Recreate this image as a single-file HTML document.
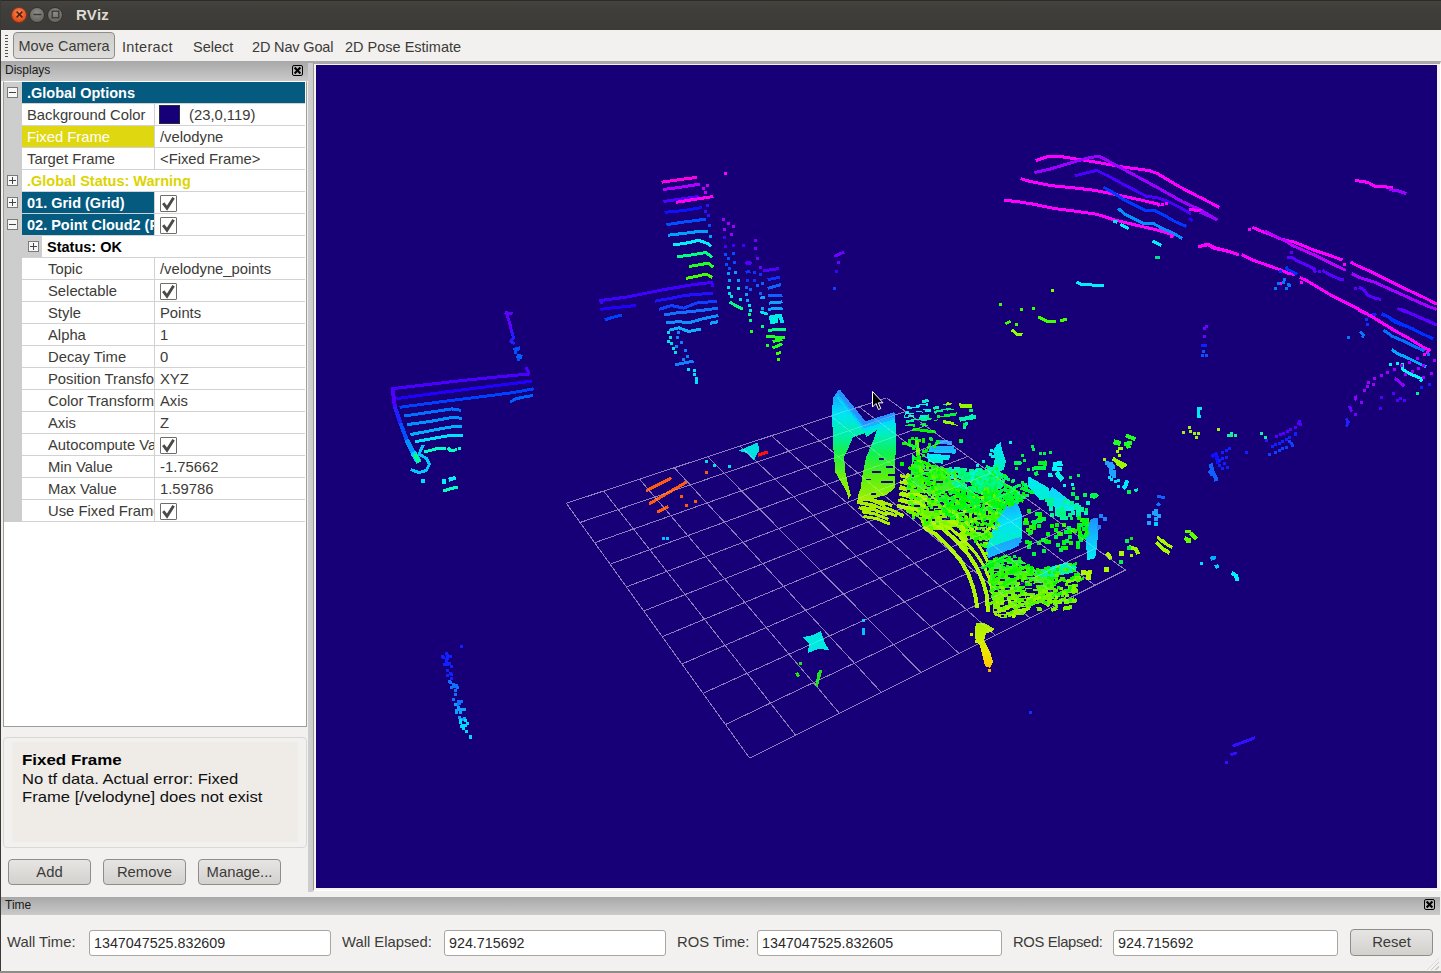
<!DOCTYPE html>
<html>
<head>
<meta charset="utf-8">
<title>RViz</title>
<style>
*{box-sizing:border-box;margin:0;padding:0}
html,body{width:1441px;height:973px;overflow:hidden;background:#f2f1f0}
body{font-family:"Liberation Sans",sans-serif;font-size:14px;color:#3c3b37;position:relative}
.abs{position:absolute}
#titlebar{left:0;top:0;width:1441px;height:30px;background:linear-gradient(#45443f 0,#3f3e3a 8px,#3c3b37 100%);border-top:1px solid #2c2b28}
#titlebar .ttl{left:76px;top:5px;font-weight:bold;font-size:15px;color:#dfdbd2;letter-spacing:.3px;white-space:nowrap}
.wb{width:16px;height:16px;border-radius:50%;top:6px}
#toolbar{left:1px;top:30px;width:1440px;height:31px;background:#f2f1f0}
.tbtn{top:39px;font-size:14.5px;color:#3c3b37;white-space:nowrap}
#leftedge{left:0;top:0;width:1px;height:973px;background:#3a3935}
.docktitle{background:linear-gradient(#a8a8a8,#cacaca);font-size:12px;color:#1a1a1a}
#tree{left:3px;top:81px;width:304px;height:646px;background:#fff;border:1px solid #9f9d99;border-top-color:#fbfaf8}
.row{position:absolute;left:22px;width:283px;height:22px;border-bottom:1px solid #d2d2d2;font-size:14.8px;color:#3c3b37}
.cell{position:absolute;top:0;height:21px;line-height:23px;overflow:hidden;white-space:nowrap}
.c1{left:0;width:132px;padding-left:5px}
.c2{left:132px;width:151px;padding-left:5px;border-left:1px solid #d2d2d2}
.full{left:0;width:283px;padding-left:5px}
.bold{font-weight:bold;font-size:14.5px}
.sel{background:#055a80;color:#fff}
.chk{position:absolute;left:5px;top:3px;width:17px;height:17px;border:1px solid #6e6d69;background:#fff;border-radius:1px}
.chk svg{position:absolute;left:0;top:0}
.exp{position:absolute;width:11px;height:11px;border:1px solid #7a7a7a;background:#f6f6f6}
.exp i{position:absolute;left:1px;top:4px;width:7px;height:1px;background:#444}
.exp b{position:absolute;left:4px;top:1px;width:1px;height:7px;background:#444}
#view{left:316px;top:65px;width:1121px;height:823px;background:#170077;overflow:hidden}
.btn{border:1px solid #8f8d88;border-radius:4px;background:linear-gradient(#e6e5e3,#d2d1ce);font-size:14.8px;text-align:center;color:#3c3b37}
.inp{top:930px;height:26px;border:1px solid #a9a6a0;border-radius:3px;background:#fff;font-size:14.3px;line-height:25px;padding-left:4px;color:#2a2a2a}
.lbl{top:934px;font-size:14.8px;white-space:nowrap}
.xicon{position:absolute;width:11px;height:11px;border:1px solid #000;border-radius:2px}
</style>
</head>
<body>
<div id="titlebar" class="abs">
  <div class="abs wb" style="left:11px;background:radial-gradient(circle at 50% 35%,#f58a5c,#df4f1c 70%);border:1px solid #8e3313"></div>
  <div class="abs wb" style="left:29px;background:radial-gradient(circle at 50% 35%,#8e8c85,#6a6862 70%);border:1px solid #34332f"></div>
  <div class="abs wb" style="left:47px;background:radial-gradient(circle at 50% 35%,#8e8c85,#6a6862 70%);border:1px solid #34332f"></div>
  <svg class="abs" style="left:0;top:0" width="80" height="29" viewBox="0 0 80 29"><path d="M16.6 10.6 L22.4 16.4 M22.4 10.6 L16.6 16.4" stroke="#5a1f0a" stroke-width="1.5"/><path d="M33.5 13.5 H41.5" stroke="#3a3935" stroke-width="1.4"/><rect x="52.2" y="10.2" width="6.6" height="6.6" fill="none" stroke="#3a3935" stroke-width="1.3"/></svg>
  <div class="abs ttl">RViz</div>
</div>
<div id="toolbar" class="abs"></div>
<div id="leftedge" class="abs"></div>
<div class="abs" style="left:5px;top:35px;width:3px;height:23px;background:repeating-linear-gradient(#55534e 0 1px,#f2f1f0 1px 3px)"></div>
<div class="abs btn" style="left:13px;top:32px;width:102px;height:27px;line-height:27px;background:linear-gradient(#cfcecb,#dedddb);font-size:14.5px">Move Camera</div>
<div class="abs tbtn" style="left:122px;letter-spacing:.3px">Interact</div>
<div class="abs tbtn" style="left:193px">Select</div>
<div class="abs tbtn" style="left:252px;letter-spacing:-.15px">2D Nav Goal</div>
<div class="abs tbtn" style="left:345px">2D Pose Estimate</div>

<div class="abs docktitle" style="left:1px;top:61px;width:307px;height:20px;padding:2px 0 0 4px">Displays</div>
<div class="abs" style="left:292px;top:65px;width:11px;height:11px"><svg width="11" height="11" viewBox="0 0 11 11" style="position:absolute;left:0;top:0"><rect x="0.5" y="0.5" width="10" height="10" rx="1.5" fill="none" stroke="#000"/><path d="M2.6 2.6 L8.4 8.4 M8.4 2.6 L2.6 8.4" stroke="#000" stroke-width="2.1"/></svg></div>
<div id="tree" class="abs"></div>
<div class="abs" style="left:4px;top:82px;width:18px;height:440px;background:#cdcdcd"></div>
<div class="row" style="top:82px"><div class="cell full sel bold">.Global Options</div></div>
<div class="exp" style="left:7px;top:87px"><i></i></div>
<div class="row" style="top:104px"><div class="cell c1">Background Color</div><div class="cell c2"><div style="position:absolute;left:4px;top:1px;width:21px;height:19px;background:#170077;border:1px solid #2a2a40"></div><span style="position:absolute;left:34px">(23,0,119)</span></div></div>
<div class="row" style="top:126px"><div class="cell c1" style="background:#dfd811;color:#fff">Fixed Frame</div><div class="cell c2">/velodyne</div></div>
<div class="row" style="top:148px"><div class="cell c1">Target Frame</div><div class="cell c2">&lt;Fixed Frame&gt;</div></div>
<div class="row" style="top:170px"><div class="cell full bold" style="color:#dcd400">.Global Status: Warning</div></div>
<div class="exp" style="left:7px;top:175px"><i></i><b></b></div>
<div class="row" style="top:192px"><div class="cell c1 sel bold">01. Grid (Grid)</div><div class="cell c2"><div class="chk"><svg width="15" height="15" viewBox="0 0 15 15"><path d="M2.2 7.2 L6 12.2 L12.6 1.8" fill="none" stroke="#4a4a48" stroke-width="2.9"/></svg></div></div></div>
<div class="exp" style="left:7px;top:197px"><i></i><b></b></div>
<div class="row" style="top:214px"><div class="cell c1 sel bold">02. Point Cloud2 (P</div><div class="cell c2"><div class="chk"><svg width="15" height="15" viewBox="0 0 15 15"><path d="M2.2 7.2 L6 12.2 L12.6 1.8" fill="none" stroke="#4a4a48" stroke-width="2.9"/></svg></div></div></div>
<div class="exp" style="left:7px;top:219px"><i></i></div>
<div class="row" style="top:236px"><div class="cell" style="left:0;width:20px;background:#cdcdcd"></div><div class="cell bold" style="left:20px;width:263px;padding-left:5px;color:#000">Status: OK</div></div>
<div class="exp" style="left:28px;top:241px"><i></i><b></b></div>
<div class="row" style="top:258px"><div class="cell c1" style="padding-left:26px">Topic</div><div class="cell c2">/velodyne_points</div></div>
<div class="row" style="top:280px"><div class="cell c1" style="padding-left:26px">Selectable</div><div class="cell c2"><div class="chk"><svg width="15" height="15" viewBox="0 0 15 15"><path d="M2.2 7.2 L6 12.2 L12.6 1.8" fill="none" stroke="#4a4a48" stroke-width="2.9"/></svg></div></div></div>
<div class="row" style="top:302px"><div class="cell c1" style="padding-left:26px">Style</div><div class="cell c2">Points</div></div>
<div class="row" style="top:324px"><div class="cell c1" style="padding-left:26px">Alpha</div><div class="cell c2">1</div></div>
<div class="row" style="top:346px"><div class="cell c1" style="padding-left:26px">Decay Time</div><div class="cell c2">0</div></div>
<div class="row" style="top:368px"><div class="cell c1" style="padding-left:26px">Position Transformer</div><div class="cell c2">XYZ</div></div>
<div class="row" style="top:390px"><div class="cell c1" style="padding-left:26px">Color Transformer</div><div class="cell c2">Axis</div></div>
<div class="row" style="top:412px"><div class="cell c1" style="padding-left:26px">Axis</div><div class="cell c2">Z</div></div>
<div class="row" style="top:434px"><div class="cell c1" style="padding-left:26px">Autocompute Value Bounds</div><div class="cell c2"><div class="chk"><svg width="15" height="15" viewBox="0 0 15 15"><path d="M2.2 7.2 L6 12.2 L12.6 1.8" fill="none" stroke="#4a4a48" stroke-width="2.9"/></svg></div></div></div>
<div class="row" style="top:456px"><div class="cell c1" style="padding-left:26px">Min Value</div><div class="cell c2">-1.75662</div></div>
<div class="row" style="top:478px"><div class="cell c1" style="padding-left:26px">Max Value</div><div class="cell c2">1.59786</div></div>
<div class="row" style="top:500px"><div class="cell c1" style="padding-left:26px">Use Fixed Frame</div><div class="cell c2"><div class="chk"><svg width="15" height="15" viewBox="0 0 15 15"><path d="M2.2 7.2 L6 12.2 L12.6 1.8" fill="none" stroke="#4a4a48" stroke-width="2.9"/></svg></div></div></div>
<!-- splitter -->
<div class="abs" style="left:308px;top:62px;width:5px;height:830px;background:#cdcdcd"></div>
<div class="abs" style="left:308px;top:61px;width:1133px;height:2px;background:#a7a7a7"></div>
<div class="abs" style="left:313px;top:61px;width:1128px;height:830px;background:#f4f3f0;border-left:1px solid #9b9995;border-top:3px solid #a9a9a9;border-bottom:1px solid #fff;border-right:1px solid #fff"></div>

<!-- info panel -->
<div class="abs" style="left:3px;top:737px;width:304px;height:111px;border:1px solid #dad8d4;border-radius:4px;background:#f2f1f0"></div>
<div class="abs" style="left:12px;top:742px;width:286px;height:100px;background:#efece8"></div>
<div class="abs" style="left:22px;top:752px;font-size:14.6px;font-weight:bold;color:#000;transform:scaleX(1.16);transform-origin:0 0;white-space:nowrap">Fixed Frame</div>
<div class="abs" style="left:22px;top:770px;font-size:14.6px;color:#111;line-height:18px;white-space:nowrap;transform:scaleX(1.14);transform-origin:0 0">No tf data. Actual error: Fixed<br>Frame [/velodyne] does not exist</div>
<div class="abs btn" style="left:8px;top:859px;width:83px;height:26px;line-height:24px">Add</div>
<div class="abs btn" style="left:103px;top:859px;width:83px;height:26px;line-height:24px">Remove</div>
<div class="abs btn" style="left:198px;top:859px;width:83px;height:26px;line-height:24px">Manage...</div>

<div id="view" class="abs">
<svg width="1121" height="823" viewBox="316 65 1121 823" style="position:absolute;left:0;top:0" fill="none" stroke-linejoin="round" shape-rendering="crispEdges">
<path d="M566.3 503.3L749.6 758.1M566.3 503.3L886.5 397.8M603.6 491.0L795.6 735.1M580.1 522.5L905.4 411.4M639.6 479.2L839.4 713.2M594.7 542.7L925.3 425.7M674.3 467.7L881.2 692.3M610.1 564.2L946.1 440.7M707.8 456.7L920.9 672.4M626.4 586.9L967.9 456.4M740.1 446.0L958.9 653.4M643.8 611.0L990.9 473.0M771.4 435.7L995.2 635.2M662.3 636.7L1015.0 490.4M801.6 425.8L1029.9 617.9M681.9 664.0L1040.4 508.7M830.8 416.1L1063.2 601.2M703.0 693.3L1067.3 528.0M859.1 406.8L1095.0 585.3M725.5 724.5L1095.6 548.4M886.5 397.8L1125.6 570.0M749.6 758.1L1125.6 570.0" stroke="#fff" stroke-opacity=".36" stroke-width="1" fill="none"/>
<path d="M1035.8 160.6 L1047.7 156.6 L1060.8 156.6 L1080.8 159.7 L1101.8 163.2 L1122.8 167 L1149 170.5 L1157.7 173.7 L1178.7 186.3 L1199.6 197.3 L1218.9 206.9" stroke="#ff00ff" stroke-width="3"/>
<path d="M1034.5 172.5 L1049.4 169.3 L1068.6 163.5 L1087.8 158 L1099.2 156.2 L1112.3 163.2 L1133.3 174.5 L1157.7 187.7 L1182.2 201.6 L1199.6 209.5 L1217.1 220" stroke="#9d00ff" stroke-width="3"/>
<path d="M1074.7 175.8 L1087.8 172.5 L1096.9 170.5 L1108.8 176.3 L1126.3 185.9 L1147.2 196.7 L1156 197.3 L1166.5 200.8 L1180.4 207.7 L1190.9 213.9" stroke="#4a00ff" stroke-width="3"/>
<path d="M1189.2 218.2 L1192.7 221.2" stroke="#2a00ff" stroke-width="3"/>
<path d="M1020.6 178.6 L1030.2 181.5 L1051.1 185.6 L1072.1 187.7 L1094.8 190.3 L1115.8 194.6 L1138.5 199.5 L1158.6 204.2 L1159.5 206.5" stroke="#ff00ff" stroke-width="3"/>
<path d="M1103.6 187.3 L1112.3 192 L1122.8 199 L1135 205.1 L1145.5 210.4 L1154.2 210.4 L1164.7 215.6 L1175.2 221.7 L1186.5 226.4" stroke="#0038ff" stroke-width="3"/>
<path d="M1003.6 200.4 L1015.3 201.3 L1033.7 204.2 L1054.6 208.6 L1075.6 211.2 L1096.6 214.2 L1115.8 220.3 L1138.5 225.7 L1157.7 230.1 L1172.6 234.8 L1171.3 238" stroke="#ff00ff" stroke-width="3"/>
<path d="M1118.1 208.3 L1124.5 213.9 L1135 219.1 L1143.7 223.5 L1153.3 223.5 L1163 228.7 L1173.4 233.1 L1182.2 238.7" stroke="#0090ff" stroke-width="3"/>
<path d="M1113.2 221.7 L1117.5 222.1" stroke="#00e0ff" stroke-width="3"/>
<path d="M1120.2 224.3 L1128.9 228.7" stroke="#00f0ff" stroke-width="3"/>
<path d="M1152.5 240.9 L1161.2 245.3" stroke="#00f0ff" stroke-width="3"/>
<path d="M1155.1 257.5 L1159.8 257.5" stroke="#00e08a" stroke-width="3"/>
<path d="M1203.1 245.3 L1208.4 244.1 L1215.4 247.9 L1225.8 250.5 L1237.2 254 L1237.7 256.1" stroke="#ff00ff" stroke-width="3"/>
<path d="M1189.2 209.5 L1201.4 210.7" stroke="#ff00ff" stroke-width="3"/>
<path d="M1076.5 282 L1080.8 284.1 L1093.1 285.1 L1104.4 285.5" stroke="#00f0ff" stroke-width="3"/>
<path d="M1354.7 180.6 L1361.7 181.3 L1367.8 182.4 L1374.8 186.2 L1381.8 186.6 L1393.1 187.6" stroke="#ff00ff" stroke-width="3"/>
<path d="M1388.7 189.7 L1397.5 190.6 L1406.2 193.6" stroke="#a000ff" stroke-width="3"/>
<path d="M1200 197.1 L1208.7 201.9 L1219.2 207.2" stroke="#ff00ff" stroke-width="3"/>
<path d="M1200 212.1 L1208.7 215.9 L1217.5 220.3" stroke="#9d00ff" stroke-width="3"/>
<path d="M1252.4 227.3 L1260.3 230.8 L1269.9 234.3 L1282.1 239.5 L1294.4 242.1 L1297.9 243.5 L1313.6 250 L1329.3 255.2 L1342.4 260" stroke="#ff00ff" stroke-width="3"/>
<path d="M1264.7 230.8 L1275.1 236 L1287.4 242.1 L1292.6 245.6 L1304.9 250.9 L1318.8 257 L1332.8 264 L1345.9 270.5" stroke="#c000ff" stroke-width="3"/>
<path d="M1200 246.5 L1202.6 245.6 L1207.9 244.8 L1214 248.3 L1226.2 250.9 L1237.6 254.4" stroke="#ff00ff" stroke-width="3"/>
<path d="M1241.9 254.7 L1252.4 260 L1266.4 264.9 L1278.6 269.2 L1289.1 273.6 L1295.2 274.5" stroke="#ff00ff" stroke-width="3"/>
<path d="M1287 257.5 L1290.9 257 L1297.9 261.4 L1308.4 265.7 L1314.5 269.2 L1315.3 272.7" stroke="#5a00ff" stroke-width="3"/>
<path d="M1322.3 270.5 L1331.1 275.3 L1339.8 279.2 L1344.2 279.7" stroke="#5a00ff" stroke-width="3"/>
<path d="M1286.2 266.3 L1287.4 269.2 L1292.6 271.8 L1297 274.5" stroke="#0030ff" stroke-width="3"/>
<path d="M1299.6 277.4 L1306.6 280.6 L1315.3 285.8 L1329.3 294.2 L1346.8 303.3 L1357.3 308.5 L1366.9 313.8" stroke="#ff00ff" stroke-width="3"/>
<path d="M1370.4 314.7 L1378.3 320.8 L1388.7 326.9 L1394 330" stroke="#ff00ff" stroke-width="3"/>
<path d="M1350.6 262.2 L1357.3 265.7 L1371.3 271.8 L1388.7 280.6 L1406.2 289.3 L1425.4 298.1 L1436.8 304.2" stroke="#ff00ff" stroke-width="3"/>
<path d="M1351.7 273.6 L1360.8 278 L1374.8 282.3 L1392.2 290.2 L1409.7 298.1 L1427.2 305.9 L1436.8 309.4" stroke="#a800ff" stroke-width="3"/>
<path d="M1359 287.2 L1364.3 290.2 L1367.8 295.4 L1374.8 298.1 L1380.9 299.5" stroke="#5a00ff" stroke-width="3"/>
<path d="M1397.5 308.5 L1404.5 310.6 L1415 315.5 L1427.2 320.8 L1436.8 325.2" stroke="#5a00ff" stroke-width="3"/>
<path d="M1372.1 314.1 L1376.5 315.2" stroke="#1020ff" stroke-width="3"/>
<path d="M1381.8 314.1 L1385.3 315.9" stroke="#1020ff" stroke-width="3"/>
<path d="M1388.7 317.3 L1394 321.7 L1402.7 325.2 L1415 329.5" stroke="#0030ff" stroke-width="3"/>
<path d="M1358.2 310 L1367.8 314.4 L1378.3 320.5 L1392.2 329.2 L1409.7 338.8 L1423.7 347.6 L1430.7 350.5" stroke="#ff00ff" stroke-width="3"/>
<path d="M1401 310 L1415 315.2 L1427.2 320.5 L1436.8 324.9" stroke="#5a00ff" stroke-width="3"/>
<path d="M1381.8 313.8 L1388.7 317 L1397.5 322.2 L1409.7 327.5 L1423.7 334.5 L1433.3 338.8" stroke="#0030ff" stroke-width="3"/>
<path d="M1383.5 330.1 L1392.2 336.2 L1404.5 341.5 L1415 346.7 L1424.6 351.1" stroke="#0070ff" stroke-width="3"/>
<path d="M1391.7 349.3 L1397.5 353.7 L1406.2 357.2 L1416.7 362.4 L1423.7 365.9 L1426.3 366.8" stroke="#00a8ff" stroke-width="3"/>
<path d="M1402.4 362.8 L1402.7 369.4 L1409.7 373.8 L1418.5 377.3 L1422 379 L1420.2 381.7" stroke="#00f8ff" stroke-width="3"/>
<path d="M1359.9 331.3 L1363.4 334.5 L1362.5 337.6" stroke="#0078ff" stroke-width="3"/>
<path d="M1394.9 378.2 L1399.2 381.7 L1404.1 386" stroke="#9000ff" stroke-width="3"/>
<path d="M1355.2 395.6 L1356.1 400.5" stroke="#9000ff" stroke-width="3"/>
<path d="M1349.4 406.1 L1351.7 411.7" stroke="#7000ff" stroke-width="3"/>
<path d="M1345.9 418.4 L1348.2 421.8 L1346.5 426.7" stroke="#2020ff" stroke-width="3"/>
<path d="M1200.9 345.8 L1207.3 345.8" stroke="#1020ff" stroke-width="3"/>
<path d="M1125.8 435.4 L1135.4 439.2" stroke="#20ff20" stroke-width="4"/>
<path d="M1113.6 441.8 L1120.6 443.6" stroke="#20ff20" stroke-width="5"/>
<path d="M1124.1 444.1 L1131.9 442.4" stroke="#20ff20" stroke-width="4"/>
<path d="M1126.4 447.3 L1130.5 446.2" stroke="#20ff20" stroke-width="3"/>
<path d="M1117.6 448.3 L1122.5 448.3" stroke="#a0f800" stroke-width="3"/>
<path d="M1112.7 458.4 L1118 461.9 L1126.7 465.8" stroke="#a0f800" stroke-width="4"/>
<path d="M1116.2 462.8 L1123.2 468.1" stroke="#a0f800" stroke-width="3"/>
<path d="M1127.6 480.3 L1125 486.4 L1123.2 488.5" stroke="#00e8ff" stroke-width="4"/>
<path d="M1134.6 490.8 L1138.1 489.6" stroke="#00f0c0" stroke-width="3"/>
<path d="M1090 496 L1097 495.1" stroke="#20ff90" stroke-width="4"/>
<path d="M1211.5 456.7 L1215.8 454.1 L1218.5 463.7" stroke="#1010ff" stroke-width="4"/>
<path d="M1210.6 463.7 L1212.3 470.7 L1215.8 477.7 L1216.4 481.2" stroke="#1060ff" stroke-width="4"/>
<path d="M1208.8 470.7 L1212.3 475.9" stroke="#1060ff" stroke-width="3"/>
<path d="M1157.3 496 L1165.1 498.1" stroke="#1060ff" stroke-width="3"/>
<path d="M1157.3 503.4 L1159.9 505.6" stroke="#1070ff" stroke-width="3"/>
<path d="M1128.4 546.7 L1136.3 549.3 L1138.1 554.2" stroke="#a0f800" stroke-width="4"/>
<path d="M1119.4 554 L1123.6 553.2" stroke="#a0f800" stroke-width="4"/>
<path d="M1106.6 552.8 L1111 558.9" stroke="#b0f000" stroke-width="4"/>
<path d="M1157.3 536.7 L1163.4 542.3 L1172.1 547.6" stroke="#a8f800" stroke-width="3"/>
<path d="M1156.4 542.3 L1163.4 549.3 L1169.5 552.8" stroke="#a8f800" stroke-width="4"/>
<path d="M1162.5 539.7 L1167.8 545" stroke="#a8f800" stroke-width="3"/>
<path d="M1185.2 531.8 L1191.4 531.8" stroke="#60ff00" stroke-width="3"/>
<path d="M1190.5 532.7 L1196.6 538.8" stroke="#60ff00" stroke-width="4"/>
<path d="M1184.4 538 L1190.5 540.6" stroke="#60ff00" stroke-width="4"/>
<path d="M1186.1 541.8 L1190.5 541.8" stroke="#60ff00" stroke-width="3"/>
<path d="M1210.6 558.9 L1215.8 557.2" stroke="#00b0ff" stroke-width="4"/>
<path d="M1216.2 564.7 L1217.6 568.2" stroke="#00d0ff" stroke-width="4"/>
<path d="M1231.6 572.9 L1235.9 575.5 L1237.7 580.8" stroke="#00f0ff" stroke-width="4"/>
<path d="M391.3 388.8 L421.1 385.3 L462.2 380.5 L503.3 376.4 L529 374 L525.9 366.8" stroke="#4a00ff" stroke-width="3"/>
<path d="M396.4 398.6 L441.6 392.5 L482.7 387.3 L532.1 381.2" stroke="#2000ff" stroke-width="3"/>
<path d="M399.5 407.3 L441.6 401.7 L482.7 396.6 L513.6 392.5 L533.7 388.8" stroke="#0040ff" stroke-width="3"/>
<path d="M509.9 402.1 L515.6 399 L523.8 397 L533.1 395.5" stroke="#0060ff" stroke-width="3"/>
<path d="M403.6 416.1 L431.4 412 L451.9 408.9 L461.2 410.3" stroke="#0070ff" stroke-width="3"/>
<path d="M406.7 424.7 L431.4 421.2 L451.9 417.5 L462.2 418.2" stroke="#0090ff" stroke-width="3"/>
<path d="M410.4 434.6 L431.4 430.5 L451.9 426.8 L462.2 426.4" stroke="#00b0ff" stroke-width="3"/>
<path d="M414.9 441.8 L431.4 438.7 L451.9 435.2 L463.2 435.2" stroke="#00e0ff" stroke-width="3"/>
<path d="M424.2 452.1 L435.5 449 L445.8 448.4" stroke="#00ffc0" stroke-width="3"/>
<path d="M447.8 447.9 L450.9 451 L457.1 449.6" stroke="#00ffc0" stroke-width="3"/>
<path d="M392.7 388.8 L394.8 406.8" stroke="#5000ff" stroke-width="4"/>
<path d="M394.8 406.8 L400.5 423.3" stroke="#2020ff" stroke-width="4"/>
<path d="M400.5 423.3 L406.7 439.7" stroke="#0050ff" stroke-width="4"/>
<path d="M406.7 439.7 L412.9 452.1" stroke="#0090ff" stroke-width="5"/>
<path d="M412.9 452.1 L419 462.3" stroke="#00d0ff" stroke-width="6"/>
<path d="M423.2 444.9 L419 454.1 L426.2 458.2 L429.3 464.4 L426.2 470.5 L419 472.6 L410.8 469.5" stroke="#00c8ff" stroke-width="3"/>
<path d="M414.9 454.1 L419 462.3" stroke="#00ff90" stroke-width="4"/>
<path d="M443.7 478.8 L443.7 483.9" stroke="#00f0ff" stroke-width="4"/>
<path d="M448.8 479.8 L455.6 477.7" stroke="#00f0ff" stroke-width="4"/>
<path d="M442.7 491.1 L450.9 488.6 L458.1 487" stroke="#00ffc0" stroke-width="3"/>
<path d="M504.7 312.3 L512.5 314" stroke="#6000ff" stroke-width="3"/>
<path d="M506.4 313.4 L509.5 322.6 L511.5 330.8" stroke="#6000ff" stroke-width="3"/>
<path d="M511.5 330.8 L513.6 338 L510.9 341.1 L514.6 344.2" stroke="#2020ff" stroke-width="3"/>
<path d="M513.6 349.9 L520.1 348.3" stroke="#0050ff" stroke-width="4"/>
<path d="M516.6 355.5 L522.2 356.9" stroke="#0060ff" stroke-width="4"/>
<path d="M661.6 182.2 L678.8 179.7 L697.3 177.3" stroke="#ff00e0" stroke-width="3"/>
<path d="M662.8 189.6 L681.3 187.1 L699.8 184.2" stroke="#b000ff" stroke-width="3"/>
<path d="M663.5 201.5 L681.3 199 L698.6 196.5" stroke="#5000ff" stroke-width="3"/>
<path d="M675.9 202.4 L693.6 199.5 L713.4 196.5" stroke="#ff00f0" stroke-width="3"/>
<path d="M664.5 212.3 L683.8 210.6 L702.3 207.4" stroke="#1010ff" stroke-width="3"/>
<path d="M666.5 224.7 L686.2 221.7 L706 219.2" stroke="#0050ff" stroke-width="3"/>
<path d="M667.7 235.3 L688.7 232.8 L701 231.1 L708 231.6" stroke="#00a0ff" stroke-width="3"/>
<path d="M672.7 245.1 L688.7 242.7 L698.6 240.2 L708.4 243.9 L711.4 246.4" stroke="#00f0ff" stroke-width="3"/>
<path d="M676.9 256.7 L691.2 255 L706 252.5 L712.2 257.5" stroke="#00ff80" stroke-width="3"/>
<path d="M688.7 266.6 L698.6 264.9 L708.4 263.1 L713.4 267.3" stroke="#20ff20" stroke-width="3"/>
<path d="M685.7 278.4 L696.1 276.5 L706 274 L712.2 277.2" stroke="#40ff00" stroke-width="3"/>
<path d="M599.4 300.7 L627 297 L664 289.6 L693.6 284.6 L713.4 282.2" stroke="#4000ff" stroke-width="3"/>
<path d="M600.4 309.3 L614.7 307.6 L635.7 305.6" stroke="#2000ff" stroke-width="3"/>
<path d="M604.8 319.9 L612.2 317.4 L622.1 315" stroke="#0040ff" stroke-width="3"/>
<path d="M654.7 301.2 L671.4 298.2 L683.8 295.7 L693.6 294.5 L713.4 293.3" stroke="#2010ff" stroke-width="3"/>
<path d="M659.1 309.3 L671.4 305.6 L683.8 308.1 L696.1 303.1 L717.1 301.2" stroke="#1040ff" stroke-width="3"/>
<path d="M664 315 L676.4 313 L688.7 311.8 L701 310.5 L718.3 308.1" stroke="#1070ff" stroke-width="3"/>
<path d="M666 322.9 L678.8 321.6 L688.7 322.9 L701 319.2 L718.3 315.5" stroke="#1090ff" stroke-width="3"/>
<path d="M669 330.3 L678.8 327.8 L688.7 331.5 L701 329" stroke="#10b0ff" stroke-width="3"/>
<path d="M709.7 323.4 L718.3 321.6" stroke="#10a0ff" stroke-width="3"/>
<path d="M675.1 364.8 L693.6 361.1" stroke="#1080ff" stroke-width="3"/>
<path d="M696.6 377.2 L696.6 384.1" stroke="#00e0ff" stroke-width="3"/>
<path d="M729.4 301.9 L735.6 305.6 L743 309.3" stroke="#00ff80" stroke-width="3"/>
<path d="M745.5 262.4 L751.6 263.6" stroke="#5000ff" stroke-width="4"/>
<path d="M762.7 271 L778.8 268.6" stroke="#5000ff" stroke-width="3"/>
<path d="M745.5 272.3 L750.4 271.5" stroke="#1030ff" stroke-width="3"/>
<path d="M767.7 279.7 L780 277.2" stroke="#1030ff" stroke-width="3"/>
<path d="M767.7 288.3 L781.2 284.6" stroke="#1060ff" stroke-width="3"/>
<path d="M767.7 295.7 L782.5 295.2" stroke="#1060ff" stroke-width="3"/>
<path d="M760.3 298.2 L765.2 297" stroke="#10a0ff" stroke-width="3"/>
<path d="M768.9 303.1 L782.5 301.9" stroke="#10a0ff" stroke-width="3"/>
<path d="M767.7 309.3 L782.5 308.1" stroke="#10a0ff" stroke-width="3"/>
<path d="M760.3 311.8 L767.7 314.2" stroke="#00e8e8" stroke-width="3"/>
<path d="M768.9 317.9 L780 315.5 L782.5 322.9" stroke="#00e8e8" stroke-width="4"/>
<path d="M767.7 330.3 L786.2 329" stroke="#00ff80" stroke-width="3"/>
<path d="M766.4 336.4 L784.9 337.7" stroke="#20ff20" stroke-width="3"/>
<path d="M772.6 341.4 L782.5 339.6" stroke="#20ff20" stroke-width="3"/>
<path d="M772.6 348 L782.5 343.8" stroke="#20ff20" stroke-width="3"/>
<path d="M776.3 353.7 L781.2 352.5" stroke="#40ff00" stroke-width="3"/>
<path d="M646 491 L671.5 477.8" stroke="#ff5a10" stroke-width="3"/>
<path d="M648.9 504.1 L686.7 481.9" stroke="#ff5a10" stroke-width="3"/>
<path d="M657.1 512.3 L668.2 506.6" stroke="#ff5a10" stroke-width="3"/>
<polygon points="738.5,450.7 757.8,442.5 759.5,449.9 753.7,460.1 747.5,453.2" fill="#00e0e0"/>
<path d="M757.8 455.2 L768.1 451.9" stroke="#ff1010" stroke-width="3"/>
<polygon points="803,637 813,635 821,631 824,641 829,650 818,649 808,653 809,644" fill="#00e8e0"/>
<path d="M796.4 672.6 L798.9 676.7" stroke="#20e020" stroke-width="3"/>
<path d="M820.7 670.1 L816.2 686.2" stroke="#20e020" stroke-width="3"/>
<path d="M863.4 627.8 L863.4 634.8" stroke="#00c0ff" stroke-width="3"/>
<path d="M1038.3 316.8 L1047 321.1 L1055.6 322" stroke="#40ff00" stroke-width="3"/>
<path d="M1059.9 320.7 L1066.8 319.4" stroke="#40ff00" stroke-width="3"/>
<path d="M1005.5 323.7 L1010.7 321.1" stroke="#40ff00" stroke-width="3"/>
<path d="M1011.6 329.7 L1016.7 334.1 L1022.4 334.9" stroke="#90ff00" stroke-width="3"/>
<path d="M1198.9 407.4 L1198 418.2" stroke="#00e8f0" stroke-width="3"/>
<path d="M1230.4 754.9 L1236.9 752.7" stroke="#3010ff" stroke-width="3"/>
<path d="M1232.5 746.2 L1249.8 739.7 L1255 737.6" stroke="#3010ff" stroke-width="3"/>
<path d="M834.3 256.3 L844.2 252" stroke="#7000ff" stroke-width="3"/>
<linearGradient id="g1" gradientUnits="userSpaceOnUse" x1="0" y1="390" x2="0" y2="498.7"><stop offset="0" stop-color="#2494ff"/><stop offset="0.1" stop-color="#12b4ff"/><stop offset="0.22" stop-color="#00e4f4"/><stop offset="0.42" stop-color="#00f0a8"/><stop offset="0.58" stop-color="#18f048"/><stop offset="0.8" stop-color="#70f010"/><stop offset="1" stop-color="#a8f000"/></linearGradient>
<polygon points="838.5,390 843.1,394.6 864.7,422.4 864.7,433.2 857.8,435.5 853.1,437 848.5,447.8 843.9,457.1 845.4,472.5 850.8,495.6 848.5,498.7 846.2,491 835.4,472.5 833.1,444.7 832,410.8 833.1,397.7" fill="url(#g1)"/>
<linearGradient id="g2" gradientUnits="userSpaceOnUse" x1="0" y1="413.1" x2="0" y2="503.3"><stop offset="0" stop-color="#12b0ff"/><stop offset="0.1" stop-color="#00e0f8"/><stop offset="0.25" stop-color="#00f0b8"/><stop offset="0.45" stop-color="#10f050"/><stop offset="0.7" stop-color="#58f010"/><stop offset="1" stop-color="#a8f000"/></linearGradient>
<polygon points="864.7,422.4 894.7,413.1 895.8,426.2 895.2,487.9 886.3,494.8 857,503.3 858.5,494 860.8,487.9 862.4,475.5 866.2,457.1 873.2,440.9 877,430.1 866.2,437.3 864.7,433.2" fill="url(#g2)"/>
<path d="M838.5 396.3 L864.7 428.7 L894.7 419.5" stroke="#00dcf8" stroke-width="5"/>
<path d="M838.5 393.3 L864.7 425.6 L894.7 416.4" stroke="#14b4ff" stroke-width="5"/>
<path d="M838.5 391.1 L864.7 423.5 L894.7 414.2" stroke="#2890ff" stroke-width="4"/>
<rect x="872.4" y="470.9" width="8.5" height="1.8" fill="#170077"/>
<rect x="878.6" y="458.3" width="4.9" height="1.5" fill="#170077"/>
<rect x="880.9" y="480.9" width="11.6" height="1.8" fill="#170077"/>
<rect x="870.9" y="493.3" width="5.4" height="1.8" fill="#170077"/>
<rect x="886.3" y="466.3" width="6.2" height="1.5" fill="#170077"/>
<rect x="866.2" y="478.6" width="4.6" height="1.5" fill="#170077"/>
<rect x="887.8" y="474" width="6.9" height="1.5" fill="#170077"/>
<path d="M857 502.5 L869.3 504.8 L878.6 512.5" stroke="#a8f000" stroke-width="3"/>
<path d="M858.5 507.6 L870.9 511.3" stroke="#a8f000" stroke-width="3"/>
<path d="M881.6 506.4 L894 511 L903.2 516.4" stroke="#a8f000" stroke-width="3"/>
<path d="M884.7 512.2 L897.1 515.9" stroke="#a8f000" stroke-width="3"/>
<path d="M866.2 499.4 L881.6 501.7 L892.4 505.6" stroke="#a8f000" stroke-width="3"/>
<path d="M900.1 486.3 L912.5 491 L924.8 495.6" stroke="#a8f000" stroke-width="3"/>
<path d="M901.7 492.5 L918.6 498.7 L931 503.3" stroke="#a8f000" stroke-width="3"/>
<path d="M900.1 498.7 L912.5 503.3 L927.9 509.5" stroke="#a8f000" stroke-width="3"/>
<path d="M897.1 504.8 L909.4 509.5 L920.2 514.1" stroke="#a8f000" stroke-width="3"/>
<path d="M903.2 480.2 L918.6 486.3 L927.9 491" stroke="#a8f000" stroke-width="3"/>
<path d="M906.3 474 L920.2 480.2" stroke="#a8f000" stroke-width="3"/>
<path d="M858.5 497.9 L870.9 500.2 L884.7 505.6" stroke="#a8f000" stroke-width="3"/>
<path d="M859.8 502.5 L872.4 504.8 L886 510.2" stroke="#a8f000" stroke-width="3"/>
<path d="M861 507.1 L873.9 509.5 L887.2 514.8" stroke="#a8f000" stroke-width="3"/>
<path d="M862.2 511.8 L875.5 514.1 L888.4 519.5" stroke="#a8f000" stroke-width="3"/>
<path d="M863.5 516.4 L877 518.7 L889.7 524.1" stroke="#a8f000" stroke-width="3"/>
<path d="M900.1 475.5 L912.5 479.4 L926.3 485.6" stroke="#a8f000" stroke-width="3"/>
<path d="M899.7 481.7 L912.5 485.6 L927 491.7" stroke="#a8f000" stroke-width="3"/>
<path d="M899.2 487.9 L912.5 491.7 L927.6 497.9" stroke="#a8f000" stroke-width="3"/>
<path d="M898.8 494 L912.5 497.9 L928.2 504.1" stroke="#a8f000" stroke-width="3"/>
<path d="M898.3 500.2 L912.5 504.1 L928.8 510.2" stroke="#a8f000" stroke-width="3"/>
<path d="M897.8 506.4 L912.5 510.2 L929.4 516.4" stroke="#a8f000" stroke-width="3"/>
<path d="M921.7 401.6 L928.6 400.5" stroke="#00f7c5" stroke-width="3"/>
<path d="M907.1 407.7 L927.9 404.7" stroke="#00f7f7" stroke-width="3"/>
<path d="M904.8 413.1 L931 410.1" stroke="#00f7de" stroke-width="3"/>
<path d="M904 417 L927.9 416.2" stroke="#00f7c5" stroke-width="3"/>
<path d="M906.3 421.6 L931 418.5" stroke="#00f794" stroke-width="3"/>
<path d="M905.5 426.2 L927.9 424.7" stroke="#00f74a" stroke-width="3"/>
<path d="M933.3 408.5 L947.9 404.7" stroke="#00f7ad" stroke-width="3"/>
<path d="M934 412.4 L954.1 408.5" stroke="#00f77b" stroke-width="3"/>
<path d="M937.1 417 L957.2 413.9" stroke="#00f731" stroke-width="3"/>
<path d="M943.3 421.6 L958.7 424.4" stroke="#94f700" stroke-width="3"/>
<path d="M946.4 403.1 L951.3 405" stroke="#94f700" stroke-width="3"/>
<path d="M958.7 404.7 L971.8 406.5" stroke="#94f700" stroke-width="3"/>
<path d="M969.2 410.8 L972.9 410.8" stroke="#00f731" stroke-width="3"/>
<path d="M958.7 418.8 L976.4 417" stroke="#00f77b" stroke-width="3"/>
<path d="M963.3 424.7 L968.3 423.8" stroke="#00f731" stroke-width="3"/>
<path d="M912.5 429 L935.6 432.1" stroke="#00f700" stroke-width="3"/>
<path d="M927.9 415.4 L937.1 420.4" stroke="#00f731" stroke-width="3"/>
<path d="M929 416h7v2h-7zM929 415h5v2h-5zM914 415h6v2h-6zM947 405h4v2h-4zM909 422h6v2h-6zM906 426h7v2h-7zM940 417h4v2h-4zM905 415h3v2h-3zM914 409h3v2h-3zM929 413h6v2h-6zM932 418h5v2h-5zM940 414h4v2h-4zM959 426h6v2h-6zM943 410h4v2h-4zM920 405h6v2h-6zM926 423h5v2h-5zM956 423h3v2h-3zM915 424h5v2h-5zM958 412h3v2h-3zM938 421h4v2h-4zM909 411h7v2h-7zM945 406h4v2h-4zM910 405h6v2h-6zM914 416h5v2h-5zM914 420h4v2h-4zM939 406h5v2h-5zM916 409h7v2h-7zM948 410h7v2h-7zM916 412h6v2h-6zM939 405h7v2h-7zM916 409h6v2h-6zM922 410h3v2h-3zM909 417h4v2h-4zM937 412h5v2h-5zM956 414h5v2h-5zM951 407h4v2h-4zM954 422h4v2h-4zM914 420h7v2h-7zM915 425h7v2h-7zM937 413h3v2h-3z" fill="#170077"/>
<linearGradient id="g3" gradientUnits="userSpaceOnUse" x1="0" y1="454" x2="0" y2="529.9"><stop offset="0" stop-color="#20f060"/><stop offset="0.35" stop-color="#30f030"/><stop offset="0.7" stop-color="#70f010"/><stop offset="1" stop-color="#98f000"/></linearGradient>
<polygon points="912.5,454 926.3,466.3 947.9,467.8 974.1,474 1000,472.5 1000,529.9 931,529.9 915.5,515.6 906.3,487.9 910.9,472.5" fill="url(#g3)"/>
<path d="M929 508h5v2h-5zM983 499h5v2h-5zM923 509h3v2h-3zM928 496h8v2h-8zM964 475h9v2h-9zM932 488h3v2h-3zM923 482h6v2h-6zM919 481h8v2h-8zM998 504h7v2h-7zM992 507h9v2h-9zM951 509h5v2h-5zM957 510h8v2h-8zM975 507h8v2h-8zM992 481h7v2h-7zM991 520h6v2h-6zM980 520h6v2h-6zM965 483h6v2h-6zM966 529h8v2h-8zM975 483h7v2h-7zM961 487h8v2h-8zM914 511h3v2h-3zM963 491h4v2h-4zM972 492h7v2h-7zM993 473h3v2h-3zM935 505h4v2h-4zM968 488h8v2h-8zM937 505h4v2h-4zM947 515h8v2h-8zM989 483h6v2h-6zM953 518h8v2h-8zM973 526h5v2h-5zM922 488h5v2h-5zM926 485h7v2h-7zM953 478h8v2h-8zM998 488h3v2h-3zM960 477h8v2h-8zM965 488h7v2h-7zM968 515h9v2h-9zM907 490h7v2h-7zM923 475h5v2h-5zM972 494h7v2h-7zM977 484h8v2h-8zM994 509h4v2h-4zM949 501h8v2h-8zM942 497h8v2h-8zM981 526h6v2h-6zM974 516h7v2h-7zM991 528h9v2h-9zM957 514h5v2h-5zM992 519h5v2h-5zM914 487h6v2h-6zM978 491h3v2h-3zM938 514h4v2h-4zM920 493h7v2h-7zM985 506h9v2h-9zM952 526h4v2h-4zM927 494h5v2h-5zM975 503h6v2h-6zM985 497h5v2h-5zM942 518h8v2h-8zM926 519h9v2h-9zM955 498h4v2h-4zM957 492h7v2h-7zM955 484h8v2h-8zM959 491h7v2h-7zM912 495h5v2h-5zM996 524h5v2h-5zM947 516h8v2h-8zM951 478h4v2h-4zM964 524h4v2h-4zM924 471h7v2h-7zM936 481h7v2h-7zM916 510h4v2h-4zM954 473h4v2h-4zM956 487h5v2h-5zM945 494h4v2h-4zM925 502h7v2h-7zM956 519h7v2h-7zM976 516h8v2h-8zM936 478h9v2h-9zM929 509h5v2h-5zM946 514h4v2h-4zM944 506h3v2h-3zM925 506h8v2h-8zM954 512h6v2h-6zM913 462h3v2h-3zM958 493h6v2h-6zM920 468h4v2h-4zM985 529h9v2h-9zM915 459h9v2h-9zM950 512h5v2h-5zM950 493h6v2h-6zM972 518h4v2h-4zM949 510h5v2h-5zM925 467h6v2h-6zM981 508h8v2h-8zM965 485h7v2h-7zM954 529h8v2h-8zM931 523h7v2h-7zM979 516h5v2h-5zM990 521h7v2h-7zM978 512h5v2h-5zM938 490h3v2h-3zM940 502h7v2h-7zM928 526h7v2h-7zM938 504h6v2h-6zM956 484h9v2h-9zM966 507h8v2h-8zM964 510h5v2h-5zM925 483h4v2h-4zM930 523h6v2h-6zM954 527h6v2h-6zM1000 502h8v2h-8zM913 499h8v2h-8zM921 490h4v2h-4zM953 500h3v2h-3zM995 486h6v2h-6zM962 482h5v2h-5zM968 497h5v2h-5zM973 476h3v2h-3zM921 511h5v2h-5zM990 511h3v2h-3zM999 526h3v2h-3zM991 487h6v2h-6zM955 525h7v2h-7zM950 528h8v2h-8zM965 489h4v2h-4zM911 494h4v2h-4zM948 505h6v2h-6zM931 498h6v2h-6zM979 494h9v2h-9zM996 510h4v2h-4zM980 501h5v2h-5zM932 506h6v2h-6zM962 502h8v2h-8zM924 473h9v2h-9zM992 521h3v2h-3zM912 475h6v2h-6zM914 505h6v2h-6zM965 482h6v2h-6zM926 480h7v2h-7zM918 515h7v2h-7zM946 474h8v2h-8zM941 504h9v2h-9zM937 496h7v2h-7zM993 486h5v2h-5zM914 460h6v2h-6zM952 506h5v2h-5zM926 504h3v2h-3zM935 509h7v2h-7z" fill="#170077"/>
<path d="M912.5 497.4L922.2 500.8" stroke="#7bf700" stroke-width="3"/>
<path d="M926 464.2L938 468.4" stroke="#31f700" stroke-width="3"/>
<path d="M955.6 500.4L962.6 502.8" stroke="#7bf700" stroke-width="3"/>
<path d="M965.3 479.2L971.7 481.5" stroke="#62f700" stroke-width="3"/>
<path d="M989.5 492.1L998.4 495.3" stroke="#62f700" stroke-width="3"/>
<path d="M992.9 499L1006 503.6" stroke="#62f700" stroke-width="3"/>
<path d="M925.7 473.8L932.3 476.1" stroke="#18f700" stroke-width="3"/>
<path d="M936 511.6L945.5 514.9" stroke="#7bf700" stroke-width="3"/>
<path d="M944.8 523L953.6 526.1" stroke="#7bf700" stroke-width="3"/>
<path d="M917.2 489.4L925.3 492.3" stroke="#31f700" stroke-width="3"/>
<path d="M920.3 514.2L932.8 518.6" stroke="#7bf700" stroke-width="3"/>
<path d="M986.6 470.7L999.8 475.3" stroke="#18f700" stroke-width="3"/>
<path d="M938.3 524.3L946.6 527.2" stroke="#7bf700" stroke-width="3"/>
<path d="M933.3 466.3L947.4 471.2" stroke="#00f700" stroke-width="3"/>
<path d="M954.8 486.7L960.9 488.8" stroke="#18f700" stroke-width="3"/>
<path d="M929.4 502.1L941.8 506.4" stroke="#62f700" stroke-width="3"/>
<path d="M986.9 524.4L992.1 526.2" stroke="#7bf700" stroke-width="3"/>
<path d="M940.3 468.9L950.4 472.4" stroke="#31f700" stroke-width="3"/>
<path d="M958.3 490.5L974 496" stroke="#31f700" stroke-width="3"/>
<path d="M992.2 471.3L1006.3 476.2" stroke="#18f700" stroke-width="3"/>
<path d="M966.4 528.7L972.1 530.7" stroke="#94f700" stroke-width="3"/>
<path d="M934.7 496.7L942.1 499.3" stroke="#31f700" stroke-width="3"/>
<path d="M915.3 470.2L921.9 472.5" stroke="#31f700" stroke-width="3"/>
<path d="M908.3 495.3L920.2 499.4" stroke="#4af700" stroke-width="3"/>
<path d="M916.6 510.1L929.7 514.7" stroke="#62f700" stroke-width="3"/>
<path d="M906.8 479.7L912 481.5" stroke="#18f700" stroke-width="3"/>
<path d="M991.7 519.3L996.9 521.2" stroke="#94f700" stroke-width="3"/>
<path d="M949.1 485.5L955.3 487.7" stroke="#31f700" stroke-width="3"/>
<path d="M924.9 483L931.3 485.3" stroke="#31f700" stroke-width="3"/>
<path d="M905.1 443.4L915.7 447.1" stroke="#18f700" stroke-width="3"/>
<path d="M913.9 477L925 480.9" stroke="#31f700" stroke-width="3"/>
<path d="M992.2 484.1L1001.7 487.5" stroke="#31f700" stroke-width="3"/>
<path d="M981.2 524.9L990.8 528.3" stroke="#adf700" stroke-width="3"/>
<path d="M906.3 510.8L919.4 515.4" stroke="#62f700" stroke-width="3"/>
<path d="M910.5 485.4L915.8 487.3" stroke="#62f700" stroke-width="3"/>
<path d="M922 524.7L934.1 528.9" stroke="#62f700" stroke-width="3"/>
<path d="M924.8 480.3L937 484.6" stroke="#18f700" stroke-width="3"/>
<path d="M989.2 488L999.7 491.6" stroke="#31f700" stroke-width="3"/>
<path d="M929.8 475.1L940 478.7" stroke="#4af700" stroke-width="3"/>
<path d="M938.6 477.9L944.1 479.9" stroke="#18f700" stroke-width="3"/>
<path d="M949.7 472.9L957.1 475.5" stroke="#4af700" stroke-width="3"/>
<path d="M971.7 481.4L976.8 483.2" stroke="#4af700" stroke-width="3"/>
<path d="M953.6 524.7L962.6 527.9" stroke="#7bf700" stroke-width="3"/>
<path d="M955.5 490.3L964 493.3" stroke="#4af700" stroke-width="3"/>
<path d="M947.4 506.1L953 508" stroke="#7bf700" stroke-width="3"/>
<path d="M916.1 459.7L929.9 464.5" stroke="#18f700" stroke-width="3"/>
<path d="M981.5 473L989.7 475.8" stroke="#18f700" stroke-width="3"/>
<path d="M922.9 510.8L936.6 515.6" stroke="#62f700" stroke-width="3"/>
<path d="M947.9 521.1L959.9 525.3" stroke="#adf700" stroke-width="3"/>
<path d="M987.6 505L998.9 509" stroke="#94f700" stroke-width="3"/>
<path d="M966.7 473.7L979.2 478.1" stroke="#00f700" stroke-width="3"/>
<path d="M970.9 475.6L984.1 480.3" stroke="#4af700" stroke-width="3"/>
<path d="M940 476.5L946.3 478.7" stroke="#4af700" stroke-width="3"/>
<path d="M962.5 486.9L968.8 489" stroke="#62f700" stroke-width="3"/>
<path d="M923.4 523.7L934.6 527.6" stroke="#62f700" stroke-width="3"/>
<path d="M913.3 473.7L924.2 477.5" stroke="#18f700" stroke-width="3"/>
<path d="M935.3 469.9L947.7 474.3" stroke="#00f700" stroke-width="3"/>
<path d="M943.2 499.5L952.5 502.7" stroke="#4af700" stroke-width="3"/>
<path d="M910.6 490.2L917.8 492.7" stroke="#62f700" stroke-width="3"/>
<path d="M908.2 467.5L919.7 471.5" stroke="#18f700" stroke-width="3"/>
<path d="M916.3 438.6 L918.6 457.1 L921.7 472.5" stroke="#62f700" stroke-width="4"/>
<path d="M937.9 441.6 L951.8 442.9" stroke="#3496ff" stroke-width="4"/>
<path d="M928.6 449.7 L955.6 451.2" stroke="#10c4ff" stroke-width="5"/>
<path d="M931 447.5 L954.1 447.8" stroke="#20acff" stroke-width="4"/>
<path d="M926.6 455.8 L949.5 457.8" stroke="#00ecf0" stroke-width="5"/>
<path d="M927.9 460.1 L943.3 461.7" stroke="#00f0d0" stroke-width="4"/>
<linearGradient id="g4" gradientUnits="userSpaceOnUse" x1="0" y1="441.9" x2="0" y2="472.4"><stop offset="0" stop-color="#00e4f8"/><stop offset="1" stop-color="#00f0c0"/></linearGradient>
<polygon points="1000.4,441.9 1002.4,450.9 1005.9,461.6 1003.9,469.3 998.5,472.4 993.1,467.8 994.7,458.6 993.1,450.9 996.2,445.5" fill="url(#g4)"/>
<path d="M1014.2 463.2 L1021.6 462.4" stroke="#00f762" stroke-width="4"/>
<path d="M1037.8 463.5 L1045.5 462.4 L1044.5 466.3" stroke="#00f718" stroke-width="4"/>
<path d="M1032.4 468.6 L1046.3 467.8" stroke="#00f74a" stroke-width="4"/>
<path d="M1035.5 471.7 L1037.1 475.5" stroke="#00f74a" stroke-width="4"/>
<path d="M1090.7 494.3 L1094.1 497.1 L1097.5 494" stroke="#00f74a" stroke-width="4"/>
<path d="M960 405.9 L971.6 406.5" stroke="#94f700" stroke-width="4"/>
<path d="M960 419.7 L969.2 417.7 L976.2 417.3" stroke="#00f7ad" stroke-width="4"/>
<path d="M970.8 414.6 L972.6 418.5" stroke="#00f7ad" stroke-width="4"/>
<path d="M1053.2 464.4 L1062.5 463.5" stroke="#00f7f7" stroke-width="5"/>
<path d="M1051.7 469.3 L1061.7 468.6" stroke="#00f7f7" stroke-width="4"/>
<path d="M1047.8 475.5 L1052.5 475.1" stroke="#00f7de" stroke-width="4"/>
<path d="M1056.3 472.4 L1062.5 480.1" stroke="#00f7de" stroke-width="5"/>
<linearGradient id="g5" gradientUnits="userSpaceOnUse" x1="0" y1="476.3" x2="0" y2="500.2"><stop offset="0" stop-color="#00e8f8"/><stop offset="1" stop-color="#00f0d0"/></linearGradient>
<polygon points="1028.6,476.3 1048.6,487.8 1048.6,498.6 1040.1,500.2 1027.8,486.3" fill="url(#g5)"/>
<linearGradient id="g6" gradientUnits="userSpaceOnUse" x1="0" y1="487.1" x2="0" y2="511"><stop offset="0" stop-color="#10d0ff"/><stop offset="1" stop-color="#00f0e0"/></linearGradient>
<polygon points="1052.5,487.1 1075.6,504.8 1074,511 1058.6,511 1048.6,501.7 1048.6,492.5" fill="url(#g6)"/>
<path d="M970 477.3L982.1 482.2" stroke="#00f77b" stroke-width="3"/>
<path d="M971 470.1L984.7 475.6" stroke="#00f794" stroke-width="3"/>
<path d="M1002.7 488.8L1014.5 493.5" stroke="#00f74a" stroke-width="3"/>
<path d="M989.7 479.2L999.4 483.1" stroke="#00f762" stroke-width="3"/>
<path d="M978.8 498.1L985.2 500.6" stroke="#00f731" stroke-width="3"/>
<path d="M967.5 476.2L981.2 481.7" stroke="#00f77b" stroke-width="3"/>
<path d="M959.5 502L968.9 505.7" stroke="#00f731" stroke-width="3"/>
<path d="M1021.6 487.6L1032.7 492.1" stroke="#00f74a" stroke-width="3"/>
<path d="M1001.7 483.8L1012.4 488.1" stroke="#00f718" stroke-width="3"/>
<path d="M1011 489.2L1017.8 492" stroke="#00f731" stroke-width="3"/>
<path d="M1003.2 493.6L1009.1 496" stroke="#00f700" stroke-width="3"/>
<path d="M983.5 478.5L990.5 481.3" stroke="#00f74a" stroke-width="3"/>
<path d="M981.6 499.4L994.8 504.7" stroke="#00f718" stroke-width="3"/>
<path d="M996 501.8L1006.6 506" stroke="#00f700" stroke-width="3"/>
<path d="M977.5 469.1L988.5 473.5" stroke="#00f74a" stroke-width="3"/>
<path d="M999.2 495.2L1011.4 500.2" stroke="#00f74a" stroke-width="3"/>
<path d="M985.9 466.4L996.4 470.6" stroke="#00f77b" stroke-width="3"/>
<path d="M1014.4 496.3L1022.7 499.7" stroke="#18f700" stroke-width="3"/>
<path d="M1009.4 495.8L1023.3 501.4" stroke="#00f718" stroke-width="3"/>
<path d="M1020.7 488L1033.7 493.2" stroke="#00f731" stroke-width="3"/>
<path d="M956.7 482.2L964.8 485.5" stroke="#00f77b" stroke-width="3"/>
<path d="M981.2 479.1L992.4 483.6" stroke="#00f731" stroke-width="3"/>
<path d="M977.7 486.1L983.8 488.5" stroke="#00f74a" stroke-width="3"/>
<path d="M984.7 505.8L992.7 509" stroke="#00f718" stroke-width="3"/>
<path d="M969.7 492.6L976.8 495.4" stroke="#00f700" stroke-width="3"/>
<path d="M976.6 510.4L984.3 513.5" stroke="#18f700" stroke-width="3"/>
<path d="M990.6 479L1000.4 482.9" stroke="#00f731" stroke-width="3"/>
<path d="M977.5 479.4L989.9 484.3" stroke="#00f762" stroke-width="3"/>
<path d="M1001.1 494.6L1013.9 499.7" stroke="#00f731" stroke-width="3"/>
<path d="M957.9 471.9L969.6 476.6" stroke="#00f794" stroke-width="3"/>
<path d="M965.4 493.7L976 497.9" stroke="#00f731" stroke-width="3"/>
<path d="M987.7 478.3L1001.5 483.8" stroke="#00f74a" stroke-width="3"/>
<path d="M961.1 499.3L968.4 502.3" stroke="#00f700" stroke-width="3"/>
<path d="M976.6 496.2L984.5 499.3" stroke="#00f731" stroke-width="3"/>
<path d="M974.3 507.3L980.1 509.6" stroke="#00f700" stroke-width="3"/>
<path d="M958.4 470L971.9 475.4" stroke="#00f74a" stroke-width="3"/>
<path d="M1006.1 492.8L1011.1 494.8" stroke="#00f74a" stroke-width="3"/>
<path d="M1011 490.5L1020 494.1" stroke="#00f700" stroke-width="3"/>
<path d="M990.1 511.2L1001.2 515.7" stroke="#31f700" stroke-width="3"/>
<path d="M1004.9 500.8L1012.9 504" stroke="#00f718" stroke-width="3"/>
<linearGradient id="g7" gradientUnits="userSpaceOnUse" x1="0" y1="501.7" x2="0" y2="549.9"><stop offset="0" stop-color="#20a8ff"/><stop offset="0.3" stop-color="#00dcf8"/><stop offset="0.7" stop-color="#00f0d0"/><stop offset="1" stop-color="#00f0a0"/></linearGradient>
<polygon points="1006.2,506.3 1017,501.7 1021.6,514 1021.6,538.7 995.4,549.9 986.2,549.9 995.4,517.1" fill="url(#g7)"/>
<linearGradient id="g8" gradientUnits="userSpaceOnUse" x1="0" y1="537.2" x2="0" y2="549.9"><stop offset="0" stop-color="#24a0ff"/><stop offset="1" stop-color="#18b8ff"/></linearGradient>
<polygon points="990.8,543.3 1020.9,537.2 1021.6,541.8 1010.9,549.9 989.3,549.9" fill="url(#g8)"/>
<path d="M1031.7 523.3 L1044.5 518.7" stroke="#00f74a" stroke-width="4"/>
<linearGradient id="g9" gradientUnits="userSpaceOnUse" x1="0" y1="517.9" x2="0" y2="549.9"><stop offset="0" stop-color="#2090ff"/><stop offset="0.5" stop-color="#10b8ff"/><stop offset="1" stop-color="#00e8f0"/></linearGradient>
<polygon points="1091,518.7 1097.5,517.9 1098.7,527.9 1096.4,549.9 1086.4,549.9 1084.8,532.5" fill="url(#g9)"/>
<path d="M960 523.3 L967.7 531" stroke="#94f700" stroke-width="3"/>
<path d="M960 527.9 L967.7 535.6" stroke="#94f700" stroke-width="3"/>
<path d="M960 532.5 L967.7 540.2" stroke="#94f700" stroke-width="3"/>
<path d="M960 537.2 L967.7 544.9" stroke="#94f700" stroke-width="3"/>
<path d="M960 541.8 L967.7 549.5" stroke="#94f700" stroke-width="3"/>
<path d="M960 546.4 L967.7 554.1" stroke="#94f700" stroke-width="3"/>
<path d="M923.4 527.1 L935.1 533.9 L948.8 546.6 L960.5 560.3 L968.3 574 L973.2 587.6 L976.1 599.3 L977.1 608.1" stroke="#adf700" stroke-width="4"/>
<path d="M929.3 521.2 L943 529 L956.6 540.8 L968.3 554.4 L977.1 568.1 L983 581.8 L986.9 595.4 L987.9 612" stroke="#adf700" stroke-width="4"/>
<path d="M939 522.2 L952.7 530 L964.4 540.8 L975.2 552.5 L984 566.1 L989.8 579.8 L992.7 593.5" stroke="#adf700" stroke-width="3"/>
<path d="M950.8 519.3 L962.5 527.1 L974.2 538.8 L982 550.5 L987.9 562.2" stroke="#adf700" stroke-width="3"/>
<path d="M900 493.9 L919.5 494.9 L929.3 501.7" stroke="#adf700" stroke-width="3"/>
<path d="M900 500.7 L915.6 501.7 L927.3 507.6" stroke="#adf700" stroke-width="3"/>
<path d="M900 506.6 L911.7 507.6 L923.4 512.5" stroke="#adf700" stroke-width="3"/>
<path d="M900 513.8 L903.5 515.8" stroke="#adf700" stroke-width="3"/>
<linearGradient id="g10" gradientUnits="userSpaceOnUse" x1="0" y1="557.4" x2="0" y2="617.9"><stop offset="0" stop-color="#28f048"/><stop offset="0.4" stop-color="#48f020"/><stop offset="0.75" stop-color="#80f008"/><stop offset="1" stop-color="#a8f000"/></linearGradient>
<polygon points="987.9,560.3 1017.1,557.4 1034.7,569.1 1056.2,581.8 1056.2,596.4 1048.4,607.1 1036.7,600.3 1025,614 1001.5,617.9 993.7,615 991.8,591.5" fill="url(#g10)"/>
<path d="M1026 591h4v2h-4zM996 584h8v2h-8zM1027 589h6v2h-6zM1000 605h4v2h-4zM1003 574h4v2h-4zM1001 562h6v2h-6zM1000 596h7v2h-7zM1031 586h7v2h-7zM1008 585h7v2h-7zM1003 602h7v2h-7zM1054 595h6v2h-6zM1040 575h5v2h-5zM1017 602h7v2h-7zM1001 615h9v2h-9zM1030 581h4v2h-4zM1037 595h8v2h-8zM1018 602h7v2h-7zM1031 591h7v2h-7zM1034 600h6v2h-6zM1054 586h4v2h-4zM1023 579h4v2h-4zM994 609h3v2h-3zM1019 596h6v2h-6zM999 579h6v2h-6zM1025 586h6v2h-6zM1042 594h5v2h-5zM1053 594h5v2h-5zM1025 610h3v2h-3zM1032 587h5v2h-5zM999 571h6v2h-6zM1017 594h5v2h-5zM1030 586h8v2h-8zM1055 590h5v2h-5zM1005 601h6v2h-6zM1035 573h8v2h-8zM1006 610h6v2h-6zM1015 592h6v2h-6zM1025 591h9v2h-9zM1007 559h4v2h-4zM1022 608h3v2h-3zM992 576h6v2h-6zM1054 597h8v2h-8zM1034 572h5v2h-5zM1021 564h9v2h-9zM1021 569h6v2h-6zM1043 574h7v2h-7zM994 572h4v2h-4zM1022 599h4v2h-4zM1035 593h8v2h-8zM1056 585h6v2h-6zM1000 562h7v2h-7zM994 590h4v2h-4zM1006 604h6v2h-6zM998 598h9v2h-9zM1030 584h6v2h-6zM997 588h4v2h-4zM1026 575h9v2h-9zM1017 607h9v2h-9zM1019 604h6v2h-6zM1015 565h7v2h-7zM1051 599h5v2h-5zM1024 579h5v2h-5zM1021 588h4v2h-4zM1038 573h5v2h-5zM1005 594h6v2h-6zM1035 583h8v2h-8zM1026 564h6v2h-6zM1005 575h9v2h-9zM1021 602h4v2h-4zM1003 565h3v2h-3zM1013 558h7v2h-7zM1004 604h8v2h-8zM1004 588h8v2h-8zM1029 589h4v2h-4zM993 569h6v2h-6zM1029 585h7v2h-7zM1026 596h5v2h-5zM1045 590h8v2h-8zM1041 599h6v2h-6zM1005 564h7v2h-7zM1005 594h6v2h-6zM1029 583h4v2h-4zM1009 600h8v2h-8zM1010 576h6v2h-6zM1017 596h8v2h-8zM1019 584h7v2h-7zM1009 608h6v2h-6zM1026 589h5v2h-5zM997 612h9v2h-9zM1042 574h3v2h-3z" fill="#170077"/>
<rect x="1017.1" y="575.9" width="8" height="8" fill="#170077"/>
<path d="M1049.2 585.4L1065.1 578.2" stroke="#4af700" stroke-width="3"/>
<path d="M1070 592L1076.9 588.9" stroke="#31f700" stroke-width="3"/>
<path d="M1013.5 608.7L1026.4 602.9" stroke="#62f700" stroke-width="3"/>
<path d="M1016 579.1L1029.9 572.8" stroke="#18f700" stroke-width="3"/>
<path d="M1036.7 602.1L1044.1 598.8" stroke="#94f700" stroke-width="3"/>
<path d="M1049.2 579.4L1059 575" stroke="#18f700" stroke-width="3"/>
<path d="M988.5 604.4L1001.2 598.7" stroke="#62f700" stroke-width="3"/>
<path d="M1065.7 570.7L1075.2 566.4" stroke="#31f700" stroke-width="3"/>
<path d="M1025.6 607.1L1041.5 599.9" stroke="#4af700" stroke-width="3"/>
<path d="M1053.1 603.8L1059.1 601.1" stroke="#7bf700" stroke-width="3"/>
<path d="M1068.3 581.4L1076 577.9" stroke="#62f700" stroke-width="3"/>
<path d="M1029.6 580.9L1045 573.9" stroke="#31f700" stroke-width="3"/>
<path d="M1024.3 567.5L1029.8 565" stroke="#00f700" stroke-width="3"/>
<path d="M1039.2 589.7L1049.7 584.9" stroke="#4af700" stroke-width="3"/>
<path d="M1003.8 607.9L1012.3 604.1" stroke="#7bf700" stroke-width="3"/>
<path d="M1020.6 577.9L1033.9 571.9" stroke="#4af700" stroke-width="3"/>
<path d="M1034.7 603L1043.5 599" stroke="#4af700" stroke-width="3"/>
<path d="M1016.8 596.7L1022.9 593.9" stroke="#62f700" stroke-width="3"/>
<path d="M1034.5 596.9L1044.6 592.3" stroke="#7bf700" stroke-width="3"/>
<path d="M1006 572.1L1017.8 566.7" stroke="#31f700" stroke-width="3"/>
<path d="M989.7 563.7L1001.6 558.4" stroke="#00f718" stroke-width="3"/>
<path d="M1052.4 596.5L1067 589.9" stroke="#31f700" stroke-width="3"/>
<path d="M1003.7 583.7L1019.5 576.7" stroke="#18f700" stroke-width="3"/>
<path d="M1042.8 597.7L1051.6 593.8" stroke="#7bf700" stroke-width="3"/>
<path d="M1011.4 573.5L1023.4 568.1" stroke="#18f700" stroke-width="3"/>
<path d="M987.9 582.9L1003 576.1" stroke="#31f700" stroke-width="3"/>
<path d="M1057.9 569.8L1066.8 565.8" stroke="#00f700" stroke-width="3"/>
<path d="M1008.2 604.6L1019.7 599.4" stroke="#62f700" stroke-width="3"/>
<path d="M1076.1 581.6L1084.1 578" stroke="#18f700" stroke-width="3"/>
<path d="M1037.2 602.2L1047.5 597.6" stroke="#62f700" stroke-width="3"/>
<path d="M1019.1 575.4L1027.3 571.7" stroke="#4af700" stroke-width="3"/>
<path d="M989.2 591.6L1005.1 584.5" stroke="#31f700" stroke-width="3"/>
<path d="M1046.3 604.4L1053.5 601.1" stroke="#62f700" stroke-width="3"/>
<path d="M985.8 565L992.2 562.2" stroke="#18f700" stroke-width="3"/>
<path d="M1028.4 571.3L1034.3 568.7" stroke="#4af700" stroke-width="3"/>
<path d="M1069.7 566.5L1076.9 563.3" stroke="#00f700" stroke-width="3"/>
<path d="M981.3 568.4L993.5 562.9" stroke="#00f718" stroke-width="3"/>
<path d="M1008.6 605.7L1023.9 598.8" stroke="#4af700" stroke-width="3"/>
<path d="M1056.4 602.4L1066 598.1" stroke="#62f700" stroke-width="3"/>
<path d="M1072.2 593.3L1077.5 590.9" stroke="#62f700" stroke-width="3"/>
<path d="M1064.1 603L1074.4 598.4" stroke="#4af700" stroke-width="3"/>
<path d="M1051.9 573.3L1064.6 567.5" stroke="#00f700" stroke-width="3"/>
<path d="M1024.7 610.5L1029.8 608.2" stroke="#94f700" stroke-width="3"/>
<path d="M1008.9 572.7L1021.1 567.2" stroke="#00f700" stroke-width="3"/>
<path d="M992.1 576.4L1001.5 572.2" stroke="#18f700" stroke-width="3"/>
<path d="M1062.8 592.5L1076 586.6" stroke="#31f700" stroke-width="3"/>
<path d="M1028.5 602.1L1042.9 595.6" stroke="#4af700" stroke-width="3"/>
<path d="M994.6 561.1L1007.3 555.4" stroke="#00f718" stroke-width="3"/>
<path d="M997.4 612.5L1010.7 606.5" stroke="#94f700" stroke-width="3"/>
<path d="M994.8 600.2L1006.7 594.8" stroke="#7bf700" stroke-width="3"/>
<linearGradient id="g11" gradientUnits="userSpaceOnUse" x1="0" y1="562.2" x2="0" y2="577.9"><stop offset="0" stop-color="#00f0c8"/><stop offset="1" stop-color="#10f090"/></linearGradient>
<polygon points="1034.7,571 1067.9,562.2 1076.7,567.1 1075.7,572 1048.4,577.9 1036.7,575.9" fill="url(#g11)"/>
<linearGradient id="g12" gradientUnits="userSpaceOnUse" x1="0" y1="490" x2="0" y2="548.6"><stop offset="0" stop-color="#28f050"/><stop offset="0.5" stop-color="#50f020"/><stop offset="1" stop-color="#98f000"/></linearGradient>
<polygon points="939,490 991.8,490 997.6,511.5 988.8,548.6 978.1,536.9 964.4,525.1 946.9,513.4" fill="url(#g12)"/>
<path d="M992 503h8v2h-8zM980 522h8v2h-8zM965 514h4v2h-4zM989 509h8v2h-8zM995 509h7v2h-7zM963 494h8v2h-8zM940 491h5v2h-5zM989 504h7v2h-7zM978 494h6v2h-6zM964 517h6v2h-6zM980 514h6v2h-6zM988 530h4v2h-4zM947 506h9v2h-9zM968 527h7v2h-7zM976 500h6v2h-6zM984 502h5v2h-5zM968 516h9v2h-9zM985 540h6v2h-6zM946 512h4v2h-4zM962 516h6v2h-6zM949 500h7v2h-7zM969 514h6v2h-6zM974 493h6v2h-6zM975 520h4v2h-4zM982 502h5v2h-5zM973 506h8v2h-8zM977 525h9v2h-9zM965 512h7v2h-7zM972 506h9v2h-9zM952 494h6v2h-6zM987 526h6v2h-6zM956 500h6v2h-6zM988 522h9v2h-9zM986 522h7v2h-7zM988 500h8v2h-8zM979 511h7v2h-7zM969 527h9v2h-9zM991 518h5v2h-5zM981 529h4v2h-4zM969 506h7v2h-7zM949 507h5v2h-5zM990 528h7v2h-7zM984 513h6v2h-6zM977 502h8v2h-8zM952 498h7v2h-7zM959 501h7v2h-7zM970 521h6v2h-6zM981 531h8v2h-8zM946 495h6v2h-6zM979 504h9v2h-9zM956 519h6v2h-6zM960 510h4v2h-4zM993 516h6v2h-6zM997 512h3v2h-3zM954 511h6v2h-6zM961 508h6v2h-6zM967 501h6v2h-6zM973 524h7v2h-7zM966 502h9v2h-9zM946 508h6v2h-6zM963 502h8v2h-8zM975 498h6v2h-6zM982 540h9v2h-9zM978 512h9v2h-9zM984 514h7v2h-7zM969 497h8v2h-8zM989 542h4v2h-4zM985 492h6v2h-6zM957 520h5v2h-5zM971 515h8v2h-8zM978 506h4v2h-4zM953 509h6v2h-6zM973 512h9v2h-9zM957 491h4v2h-4zM982 511h8v2h-8zM949 503h6v2h-6zM976 530h6v2h-6zM958 508h5v2h-5zM984 528h4v2h-4zM943 491h7v2h-7zM991 522h6v2h-6zM963 523h8v2h-8zM984 520h5v2h-5zM977 494h6v2h-6zM971 522h6v2h-6zM994 523h6v2h-6zM960 517h5v2h-5zM965 505h3v2h-3zM960 492h7v2h-7zM958 506h6v2h-6zM941 493h8v2h-8zM979 505h7v2h-7zM960 520h5v2h-5zM971 528h8v2h-8zM993 514h5v2h-5zM974 520h7v2h-7zM954 512h3v2h-3zM981 538h7v2h-7zM945 509h9v2h-9zM986 499h4v2h-4zM982 528h3v2h-3zM970 501h8v2h-8zM970 491h5v2h-5zM991 532h3v2h-3zM994 505h7v2h-7zM984 523h4v2h-4zM994 514h4v2h-4zM977 510h8v2h-8zM987 500h6v2h-6zM965 497h8v2h-8z" fill="#170077"/>
<path d="M992.6 503.9L1004.9 508.8" stroke="#00f718" stroke-width="3"/>
<path d="M989.2 497.8L996.5 500.8" stroke="#18f700" stroke-width="3"/>
<path d="M974.8 511.9L987.5 517" stroke="#31f700" stroke-width="3"/>
<path d="M972.6 506.7L982.4 510.6" stroke="#00f700" stroke-width="3"/>
<path d="M983.6 492L990.6 494.8" stroke="#00f718" stroke-width="3"/>
<path d="M987.7 502.4L1000.5 507.5" stroke="#00f700" stroke-width="3"/>
<path d="M952.1 515L966.3 520.7" stroke="#00f700" stroke-width="3"/>
<path d="M965.7 532.2L978.6 537.4" stroke="#4af700" stroke-width="3"/>
<path d="M954.5 499.7L966.4 504.5" stroke="#18f700" stroke-width="3"/>
<path d="M980.7 490.3L994 495.7" stroke="#00f700" stroke-width="3"/>
<path d="M955.1 495.3L962.4 498.2" stroke="#18f700" stroke-width="3"/>
<path d="M931.2 488.4L942.3 492.8" stroke="#00f718" stroke-width="3"/>
<path d="M982.9 496.1L998.6 502.3" stroke="#00f700" stroke-width="3"/>
<path d="M962.5 498.8L970.2 501.8" stroke="#18f700" stroke-width="3"/>
<path d="M949.2 507.2L955.4 509.6" stroke="#31f700" stroke-width="3"/>
<path d="M990.6 518L1000.6 522" stroke="#4af700" stroke-width="3"/>
<path d="M983.1 491.3L991.3 494.6" stroke="#00f718" stroke-width="3"/>
<path d="M970.1 536.8L975.9 539.1" stroke="#62f700" stroke-width="3"/>
<path d="M959.7 496.1L966.2 498.7" stroke="#18f700" stroke-width="3"/>
<path d="M961.1 506.6L974.9 512.1" stroke="#18f700" stroke-width="3"/>
<path d="M951.6 491.6L959.3 494.6" stroke="#00f731" stroke-width="3"/>
<path d="M963.2 506.4L972.1 509.9" stroke="#00f700" stroke-width="3"/>
<path d="M957.5 507.3L971.8 513" stroke="#31f700" stroke-width="3"/>
<path d="M953.4 491.4L967.3 497" stroke="#00f718" stroke-width="3"/>
<path d="M989.5 499.9L1003.7 505.5" stroke="#00f718" stroke-width="3"/>
<path d="M964.4 517.5L978.2 523.1" stroke="#31f700" stroke-width="3"/>
<path d="M987.3 515.6L996.4 519.2" stroke="#31f700" stroke-width="3"/>
<path d="M973.3 533.1L985.2 537.8" stroke="#4af700" stroke-width="3"/>
<path d="M974.6 488.4L984.9 492.5" stroke="#00f731" stroke-width="3"/>
<path d="M979.8 544.2L987.3 547.2" stroke="#31f700" stroke-width="3"/>
<path d="M986.1 502L993.2 504.9" stroke="#18f700" stroke-width="3"/>
<path d="M987.6 492L992.9 494.1" stroke="#00f731" stroke-width="3"/>
<path d="M989.8 509.7L994.9 511.8" stroke="#00f718" stroke-width="3"/>
<path d="M990.8 514.8L1003.1 519.7" stroke="#4af700" stroke-width="3"/>
<path d="M953.7 500.1L964.3 504.4" stroke="#00f718" stroke-width="3"/>
<path d="M966.9 525.4L974.3 528.3" stroke="#4af700" stroke-width="3"/>
<path d="M945.9 508.7L956 512.8" stroke="#00f718" stroke-width="3"/>
<path d="M946.6 503L959.7 508.2" stroke="#00f718" stroke-width="3"/>
<path d="M946 508.5L955.6 512.3" stroke="#31f700" stroke-width="3"/>
<path d="M944.5 503.2L958.4 508.7" stroke="#00f700" stroke-width="3"/>
<path d="M966 532.2L979.2 537.5" stroke="#18f700" stroke-width="3"/>
<path d="M981.1 490.4L987.5 493" stroke="#00f700" stroke-width="3"/>
<path d="M940 498.9L947.5 501.9" stroke="#00f718" stroke-width="3"/>
<path d="M981.8 522.1L992.9 526.5" stroke="#18f700" stroke-width="3"/>
<path d="M969.3 493.3L979.4 497.3" stroke="#00f700" stroke-width="3"/>
<path d="M942.5 509.8L953.9 514.3" stroke="#00f700" stroke-width="3"/>
<path d="M950.2 514.9L960.7 519.1" stroke="#00f700" stroke-width="3"/>
<path d="M972.9 510.4L983.6 514.7" stroke="#00f718" stroke-width="3"/>
<path d="M966.7 533.5L977.9 538" stroke="#62f700" stroke-width="3"/>
<path d="M998 514.9L1003.2 517" stroke="#18f700" stroke-width="3"/>
<linearGradient id="g13" gradientUnits="userSpaceOnUse" x1="0" y1="537.8" x2="0" y2="558.3"><stop offset="0" stop-color="#20a0ff"/><stop offset="1" stop-color="#10c0ff"/></linearGradient>
<polygon points="985.9,549.6 1017.1,537.8 1019.5,545.6 987.9,558.3" fill="url(#g13)"/>
<linearGradient id="g14" gradientUnits="userSpaceOnUse" x1="0" y1="505.6" x2="0" y2="548.6"><stop offset="0" stop-color="#18b0ff"/><stop offset="0.4" stop-color="#00e4f4"/><stop offset="1" stop-color="#00f0c0"/></linearGradient>
<polygon points="995.7,521.2 1011.3,505.6 1017.1,511.5 1019.1,536.9 985.9,548.6 991.8,533" fill="url(#g14)"/>
<linearGradient id="g15" gradientUnits="userSpaceOnUse" x1="0" y1="518.3" x2="0" y2="560.3"><stop offset="0" stop-color="#2090ff"/><stop offset="0.5" stop-color="#10c0ff"/><stop offset="1" stop-color="#00f0f0"/></linearGradient>
<polygon points="1092.3,519.3 1097.2,518.3 1098.2,534.9 1095.2,558.3 1087.4,560.3 1085.5,533" fill="url(#g15)"/>
<path d="M1107 552.9 L1110.9 558.3" stroke="#adf700" stroke-width="4"/>
<path d="M1066 581.8 L1079.6 577.9" stroke="#7bf700" stroke-width="4"/>
<path d="M1067.9 587.6 L1075.7 585.7" stroke="#7bf700" stroke-width="4"/>
<path d="M1067.9 591.5 L1077.7 589.6" stroke="#7bf700" stroke-width="4"/>
<path d="M1064 602.3 L1076.7 600.3" stroke="#7bf700" stroke-width="4"/>
<path d="M1063 608.7 L1071.8 607.1" stroke="#7bf700" stroke-width="4"/>
<path d="M1051.3 610.1 L1057.2 608.1" stroke="#7bf700" stroke-width="4"/>
<path d="M1036.7 609.5 L1041.6 608.7" stroke="#7bf700" stroke-width="4"/>
<path d="M1073.8 577.9 L1080.6 576.9" stroke="#7bf700" stroke-width="4"/>
<linearGradient id="g16" gradientUnits="userSpaceOnUse" x1="0" y1="622.8" x2="0" y2="668.1"><stop offset="0" stop-color="#a8f000"/><stop offset="0.35" stop-color="#c8f000"/><stop offset="0.65" stop-color="#f0e800"/><stop offset="1" stop-color="#ffc400"/></linearGradient>
<polygon points="976.1,622.8 984,622.8 993.7,628.6 993.3,631 985.9,633.5 984.3,640.3 990.2,652.1 992.9,661.8 990.2,668.1 985.1,666.1 980.1,646.2 975.4,638.4 975.4,626.7" fill="url(#g16)"/>
<path d="M1161 203h3v3h-3zM1165 202h3v3h-3zM1198 245h3v3h-3zM1248 228h3v3h-3zM1343 263h3v3h-3zM1279 282h3v3h-3zM1300 281h3v3h-3zM1423 353h3v3h-3zM1426 351h3v3h-3zM724 172h3v3h-3z" fill="#ff00ff" stroke="none"/>
<path d="M1051 289h3v3h-3z" fill="#80ff00" stroke="none"/>
<path d="M1290 251h3v3h-3zM1318 270h3v3h-3zM1354 287h3v3h-3z" fill="#5a00ff" stroke="none"/>
<path d="M1279 270h3v3h-3z" fill="#0030ff" stroke="none"/>
<path d="M1274 287h3v3h-3zM1277 282h3v3h-3zM1283 278h3v3h-3zM1282 281h3v3h-3zM1285 287h3v3h-3zM1287 283h3v3h-3zM1288 284h3v3h-3zM1347 336h3v3h-3z" fill="#0078ff" stroke="none"/>
<path d="M1365 318h3v3h-3zM1366 323h3v3h-3zM1365 318h3v3h-3zM1366 323h3v3h-3zM753 271h3v3h-3zM759 273h3v3h-3zM746 279h3v3h-3zM753 279h3v3h-3zM1029 711h3v3h-3z" fill="#1030ff" stroke="none"/>
<path d="M1427 353h3v3h-3z" fill="#0070ff" stroke="none"/>
<path d="M1389 363h3v3h-3zM1396 362h3v3h-3z" fill="#00f0ff" stroke="none"/>
<path d="M1416 357h3v3h-3zM1433 359h3v3h-3zM1408 361h3v3h-3zM1400 364h3v3h-3zM1422 364h3v3h-3zM1393 368h3v3h-3zM1417 367h3v3h-3zM1411 370h3v3h-3zM1386 371h3v3h-3zM1430 372h3v3h-3zM1404 373h3v3h-3zM1380 374h3v3h-3zM1422 376h3v3h-3zM1373 377h3v3h-3zM1367 381h3v3h-3zM1366 385h3v3h-3zM1363 389h3v3h-3zM1372 383h3v3h-3zM722 218h3v3h-3zM727 222h3v3h-3zM732 225h3v3h-3zM723 228h3v3h-3zM730 233h3v3h-3z" fill="#a000ff" stroke="none"/>
<path d="M1360 401h3v3h-3z" fill="#9000ff" stroke="none"/>
<path d="M1354 413h3v3h-3zM1205 325h3v3h-3zM1203 327h3v3h-3zM1203 335h3v3h-3zM754 239h3v3h-3zM754 247h3v3h-3zM756 257h3v3h-3zM759 266h3v3h-3zM837 261h3v3h-3z" fill="#7000ff" stroke="none"/>
<path d="M1392 392h3v3h-3zM1380 396h3v3h-3zM1396 399h3v3h-3zM1399 397h3v3h-3zM1403 399h3v3h-3zM1379 407h3v3h-3zM1275 435h3v3h-3zM1279 433h3v3h-3zM1282 432h3v3h-3zM1286 430h3v3h-3zM1289 428h3v3h-3zM1294 426h3v3h-3zM1298 420h3v3h-3zM1299 423h3v3h-3zM1297 422h3v3h-3z" fill="#5000ff" stroke="none"/>
<path d="M1420 386h3v3h-3zM1428 383h3v3h-3zM1271 445h3v3h-3zM1274 443h3v3h-3zM1278 442h3v3h-3zM1281 440h3v3h-3zM1285 438h3v3h-3zM1288 436h3v3h-3zM1294 432h3v3h-3zM1294 433h3v3h-3zM1221 451h3v3h-3zM1225 449h3v3h-3zM1228 447h3v3h-3zM1225 456h3v3h-3zM1221 457h3v3h-3zM1218 459h3v3h-3zM1223 462h3v3h-3zM1226 466h3v3h-3zM1221 467h3v3h-3zM1245 451h3v3h-3zM1218 464h3v3h-3zM446 657h3v3h-3zM446 654h3v3h-3zM450 673h3v3h-3zM449 655h3v3h-3zM444 663h3v3h-3zM442 656h3v3h-3zM446 663h3v3h-3zM448 662h3v3h-3zM450 677h3v3h-3zM445 652h3v3h-3zM443 663h3v3h-3zM445 662h3v3h-3zM445 663h3v3h-3zM449 672h3v3h-3zM446 674h3v3h-3zM446 669h3v3h-3zM441 655h3v3h-3zM445 658h3v3h-3zM449 672h3v3h-3zM450 665h3v3h-3zM445 659h3v3h-3zM449 672h3v3h-3zM460 645h3v3h-3z" fill="#1020ff" stroke="none"/>
<path d="M1416 392h3v3h-3z" fill="#00f090" stroke="none"/>
<path d="M1202 350h3v3h-3zM1201 354h3v3h-3zM1205 354h3v3h-3z" fill="#1050ff" stroke="none"/>
<path d="M1199 407h3v3h-3zM1198 415h3v3h-3z" fill="#00f0f0" stroke="none"/>
<path d="M1217 428h3v3h-3z" fill="#c0f000" stroke="none"/>
<path d="M1227 434h3v3h-3zM1230 432h3v3h-3zM1234 434h3v3h-3zM1260 432h3v3h-3zM1264 436h3v3h-3z" fill="#10f090" stroke="none"/>
<path d="M1265 439h3v3h-3zM704 210h3v3h-3zM707 214h3v3h-3zM706 204h3v3h-3zM1225 761h3v3h-3z" fill="#3010ff" stroke="none"/>
<path d="M1268 453h3v3h-3zM1274 451h3v3h-3zM1278 449h3v3h-3zM1281 447h3v3h-3zM1285 446h3v3h-3zM1288 440h3v3h-3zM1290 442h3v3h-3zM1291 444h3v3h-3zM833 287h3v3h-3z" fill="#1040ff" stroke="none"/>
<path d="M1116 450h3v3h-3zM1118 454h3v3h-3zM1103 458h3v3h-3zM1130 554h3v3h-3z" fill="#a0f800" stroke="none"/>
<path d="M1105 461h4v4h-4zM1109 462h4v4h-4zM1108 464h4v4h-4zM1111 465h4v4h-4zM1109 468h4v4h-4zM1112 470h4v4h-4zM1110 472h4v4h-4zM1112 474h4v4h-4zM1107 463h4v4h-4zM1110 464h4v4h-4zM1109 470h4v4h-4zM1154 509h4v4h-4zM1152 511h4v4h-4zM1154 512h4v4h-4zM1147 514h4v4h-4zM1157 514h4v4h-4zM1154 517h4v4h-4zM1147 521h4v4h-4z" fill="#20a0ff" stroke="none"/>
<path d="M1108 476h3v3h-3zM1110 478h3v3h-3zM1114 480h3v3h-3zM1117 479h3v3h-3zM1117 485h3v3h-3zM1200 562h3v3h-3zM687 368h3v3h-3zM693 369h3v3h-3zM693 373h3v3h-3zM695 381h3v3h-3z" fill="#00e0ff" stroke="none"/>
<path d="M1128 490h3v3h-3z" fill="#00f0e0" stroke="none"/>
<path d="M1188 426h3v3h-3zM1182 431h3v3h-3zM1189 430h3v3h-3zM1193 432h3v3h-3zM1197 432h3v3h-3zM1195 436h3v3h-3zM1217 428h3v3h-3z" fill="#a0f020" stroke="none"/>
<path d="M1227 434h3v3h-3zM1230 432h3v3h-3zM1230 434h3v3h-3zM1234 434h3v3h-3zM1260 432h3v3h-3zM1264 436h3v3h-3z" fill="#10f0a0" stroke="none"/>
<path d="M1154 522h4v4h-4z" fill="#00d0ff" stroke="none"/>
<path d="M1099 515h3v3h-3zM1103 517h3v3h-3zM448 680h3v3h-3zM450 686h3v3h-3zM456 686h3v3h-3zM456 703h3v3h-3zM457 700h3v3h-3zM457 702h3v3h-3zM458 702h3v3h-3zM460 700h3v3h-3zM455 684h3v3h-3zM453 685h3v3h-3zM452 683h3v3h-3zM454 689h3v3h-3zM452 698h3v3h-3zM449 681h3v3h-3zM454 693h3v3h-3z" fill="#1070ff" stroke="none"/>
<path d="M1130 537h3v3h-3zM1126 540h3v3h-3zM799 662h3v3h-3z" fill="#20e020" stroke="none"/>
<path d="M1119 561h3v3h-3z" fill="#00d0ff" stroke="none"/>
<path d="M1105 568h4v4h-4zM1088 570h4v4h-4z" fill="#b0f000" stroke="none"/>
<path d="M1192 534h3v3h-3z" fill="#60ff00" stroke="none"/>
<path d="M458 447h3v3h-3z" fill="#00ffc0" stroke="none"/>
<path d="M421 479h4v4h-4z" fill="#00e0ff" stroke="none"/>
<path d="M514 351h3v3h-3zM517 358h3v3h-3zM708 224h3v3h-3zM724 253h3v3h-3zM732 252h3v3h-3zM727 257h3v3h-3zM733 261h3v3h-3zM725 263h3v3h-3zM728 267h3v3h-3z" fill="#0050ff" stroke="none"/>
<path d="M706 184h3v3h-3zM702 187h3v3h-3zM704 191h3v3h-3z" fill="#c000ff" stroke="none"/>
<path d="M709 235h3v3h-3zM727 272h3v3h-3zM734 271h3v3h-3zM728 279h3v3h-3zM737 279h3v3h-3z" fill="#00a0ff" stroke="none"/>
<path d="M711 284h3v3h-3zM600 301h3v3h-3zM723 236h3v3h-3zM724 245h3v3h-3zM732 244h3v3h-3zM742 244h3v3h-3zM835 270h3v3h-3z" fill="#4000ff" stroke="none"/>
<path d="M667 331h3v3h-3zM669 336h3v3h-3zM670 342h3v3h-3zM672 347h3v3h-3zM674 351h3v3h-3zM667 340h3v3h-3zM727 286h3v3h-3zM737 287h3v3h-3zM728 292h3v3h-3zM739 298h3v3h-3zM730 295h3v3h-3zM705 460h3v3h-3zM713 464h3v3h-3zM728 465h3v3h-3z" fill="#00e0e0" stroke="none"/>
<path d="M677 331h3v3h-3zM680 341h3v3h-3zM684 349h3v3h-3zM686 355h3v3h-3zM682 358h3v3h-3zM676 336h3v3h-3zM675 345h3v3h-3z" fill="#1080ff" stroke="none"/>
<path d="M745 286h3v3h-3zM749 288h3v3h-3zM756 284h3v3h-3zM761 282h3v3h-3zM759 292h3v3h-3z" fill="#1060ff" stroke="none"/>
<path d="M745 293h3v3h-3zM746 299h3v3h-3zM761 307h3v3h-3zM457 706h3v3h-3zM458 708h3v3h-3zM463 717h3v3h-3zM458 716h3v3h-3zM461 708h3v3h-3zM455 709h3v3h-3zM463 708h3v3h-3zM459 711h3v3h-3zM455 711h3v3h-3zM464 719h3v3h-3zM454 703h3v3h-3zM461 718h3v3h-3z" fill="#10a0ff" stroke="none"/>
<path d="M748 304h3v3h-3zM749 309h3v3h-3z" fill="#00e8e8" stroke="none"/>
<path d="M770 319h5v5h-5zM773 318h5v5h-5z" fill="#00f0e0" stroke="none"/>
<path d="M748 313h3v3h-3zM749 319h3v3h-3zM761 325h3v3h-3z" fill="#00ff80" stroke="none"/>
<path d="M750 330h3v3h-3zM766 344h3v3h-3z" fill="#20ff20" stroke="none"/>
<path d="M777 358h3v3h-3zM999 303h3v3h-3zM1020 308h3v3h-3zM1032 307h3v3h-3zM1015 323h3v3h-3z" fill="#40ff00" stroke="none"/>
<path d="M680 495h3v3h-3zM694 500h3v3h-3zM685 504h3v3h-3zM705 471h3v3h-3z" fill="#ff5a10" stroke="none"/>
<path d="M662 537h3v3h-3zM666 537h3v3h-3zM862 619h3v3h-3z" fill="#00c0ff" stroke="none"/>
<path d="M817 673h4v4h-4z" fill="#20e020" stroke="none"/>
<path d="M459 721h3v3h-3zM462 727h3v3h-3zM466 722h3v3h-3zM460 725h3v3h-3zM461 724h3v3h-3zM464 724h3v3h-3zM459 719h3v3h-3zM465 730h3v3h-3zM469 735h3v3h-3zM469 736h3v3h-3zM464 719h3v3h-3z" fill="#00d8ff" stroke="none"/>
<path d="M959 439h4v4h-4zM900 462h4v4h-4zM1055 523h4v4h-4zM1041 538h4v4h-4zM1050 524h4v4h-4zM1038 512h4v4h-4zM1062 540h4v4h-4zM1061 546h4v4h-4zM1068 530h4v4h-4zM1027 509h4v4h-4zM1077 527h4v4h-4zM1082 520h4v4h-4zM1082 535h4v4h-4zM1082 522h4v4h-4zM1077 523h4v4h-4zM1084 527h4v4h-4z" fill="#00f700" stroke="none"/>
<path d="M925 449h3v3h-3zM952 488h3v3h-3zM990 474h3v3h-3zM931 486h3v3h-3zM928 443h3v3h-3zM930 472h3v3h-3zM912 447h3v3h-3zM934 483h3v3h-3zM972 488h3v3h-3zM908 485h3v3h-3zM927 482h3v3h-3zM977 470h3v3h-3zM910 478h3v3h-3zM917 455h3v3h-3zM992 469h3v3h-3zM924 450h3v3h-3zM922 438h3v3h-3zM944 493h3v3h-3zM933 489h3v3h-3zM960 488h3v3h-3zM908 439h3v3h-3zM997 472h3v3h-3zM998 477h3v3h-3zM908 442h3v3h-3zM993 473h3v3h-3zM936 470h3v3h-3zM918 473h3v3h-3zM975 487h3v3h-3zM1019 499h3v3h-3zM983 493h3v3h-3zM984 499h3v3h-3zM974 497h3v3h-3zM983 501h3v3h-3zM973 499h3v3h-3zM963 504h3v3h-3zM1023 494h3v3h-3zM1007 491h3v3h-3zM984 501h3v3h-3zM972 497h3v3h-3zM993 491h3v3h-3zM963 500h3v3h-3zM989 496h3v3h-3zM985 498h3v3h-3zM1002 506h3v3h-3zM1017 495h3v3h-3zM1011 499h3v3h-3zM959 493h3v3h-3zM1005 501h3v3h-3zM1011 503h3v3h-3zM1017 491h3v3h-3zM960 500h3v3h-3zM970 494h3v3h-3zM1022 492h3v3h-3zM1009 559h3v3h-3zM1055 580h3v3h-3zM1070 577h3v3h-3zM1053 582h3v3h-3zM995 557h3v3h-3zM1030 566h3v3h-3zM1030 573h3v3h-3zM1025 583h3v3h-3zM995 557h3v3h-3zM1001 575h3v3h-3zM988 565h3v3h-3zM1018 557h3v3h-3zM1056 568h3v3h-3zM1001 561h3v3h-3zM998 560h3v3h-3zM1025 577h3v3h-3zM991 564h3v3h-3zM991 583h3v3h-3zM993 558h3v3h-3zM1008 556h3v3h-3zM1038 569h3v3h-3zM1055 577h3v3h-3zM1006 558h3v3h-3zM1074 573h3v3h-3zM957 490h3v3h-3zM979 538h3v3h-3zM991 516h3v3h-3zM980 523h3v3h-3zM984 500h3v3h-3zM957 513h3v3h-3zM980 535h3v3h-3zM972 493h3v3h-3zM963 492h3v3h-3zM971 526h3v3h-3zM970 504h3v3h-3zM958 521h3v3h-3zM985 499h3v3h-3zM955 507h3v3h-3zM948 503h3v3h-3zM971 522h3v3h-3zM983 500h3v3h-3zM951 500h3v3h-3zM945 506h3v3h-3zM963 490h3v3h-3zM954 500h3v3h-3zM984 490h3v3h-3zM935 490h3v3h-3zM948 490h3v3h-3zM980 500h3v3h-3z" fill="#00f700" stroke="none"/>
<path d="M908 501h3v3h-3zM954 510h3v3h-3zM918 507h3v3h-3zM995 498h3v3h-3zM934 486h3v3h-3zM937 513h3v3h-3zM930 474h3v3h-3zM932 482h3v3h-3zM974 505h3v3h-3zM988 504h3v3h-3zM926 466h3v3h-3zM996 479h3v3h-3zM987 490h3v3h-3zM927 522h3v3h-3zM924 486h3v3h-3zM991 482h3v3h-3zM953 495h3v3h-3zM963 508h3v3h-3zM948 514h3v3h-3zM957 502h3v3h-3zM911 464h3v3h-3zM922 487h3v3h-3zM929 471h3v3h-3zM940 472h3v3h-3zM956 501h3v3h-3zM936 469h3v3h-3zM987 488h3v3h-3zM910 483h3v3h-3zM973 485h3v3h-3zM942 507h3v3h-3zM921 481h3v3h-3zM910 494h3v3h-3zM979 472h3v3h-3zM924 523h3v3h-3zM911 495h3v3h-3zM997 481h3v3h-3zM981 510h3v3h-3zM953 509h3v3h-3zM936 514h3v3h-3zM960 517h3v3h-3zM999 571h3v3h-3zM1021 579h3v3h-3zM1076 577h3v3h-3zM1032 598h3v3h-3zM1057 565h3v3h-3zM1060 587h3v3h-3zM1004 585h3v3h-3zM1043 601h3v3h-3zM1077 579h3v3h-3zM1043 586h3v3h-3zM1002 587h3v3h-3zM1000 572h3v3h-3zM1061 594h3v3h-3zM1057 572h3v3h-3zM1010 611h3v3h-3zM1038 600h3v3h-3zM1011 584h3v3h-3zM1063 568h3v3h-3zM1060 577h3v3h-3zM1035 576h3v3h-3zM1005 592h3v3h-3zM1042 593h3v3h-3zM1018 602h3v3h-3zM1054 598h3v3h-3zM1014 600h3v3h-3zM993 593h3v3h-3zM1043 586h3v3h-3zM1054 572h3v3h-3zM1024 576h3v3h-3zM1065 592h3v3h-3zM1016 577h3v3h-3zM1055 578h3v3h-3zM1005 575h3v3h-3zM1036 585h3v3h-3zM953 515h3v3h-3zM983 513h3v3h-3zM983 543h3v3h-3zM969 516h3v3h-3zM958 522h3v3h-3zM980 514h3v3h-3zM995 527h3v3h-3zM963 523h3v3h-3zM983 533h3v3h-3zM971 519h3v3h-3zM965 524h3v3h-3zM980 533h3v3h-3zM981 523h3v3h-3zM989 521h3v3h-3zM981 513h3v3h-3z" fill="#4af700" stroke="none"/>
<path d="M990 523h3v3h-3zM936 472h3v3h-3zM974 472h3v3h-3zM951 503h3v3h-3zM964 515h3v3h-3zM981 518h3v3h-3zM978 475h3v3h-3zM917 475h3v3h-3zM915 462h3v3h-3zM922 518h3v3h-3zM934 510h3v3h-3zM912 465h3v3h-3zM980 514h3v3h-3zM917 486h3v3h-3zM977 497h3v3h-3zM951 488h3v3h-3zM923 520h3v3h-3zM927 498h3v3h-3zM994 491h3v3h-3zM938 493h3v3h-3zM998 513h3v3h-3zM989 484h3v3h-3zM927 472h3v3h-3zM926 521h3v3h-3zM928 519h3v3h-3zM941 507h3v3h-3zM940 477h3v3h-3zM989 488h3v3h-3zM928 493h3v3h-3zM938 469h3v3h-3zM956 479h3v3h-3zM975 494h3v3h-3zM938 474h3v3h-3zM952 472h3v3h-3zM946 496h3v3h-3zM969 500h3v3h-3zM921 466h3v3h-3zM912 516h3v3h-3zM930 506h3v3h-3zM981 488h3v3h-3zM936 522h3v3h-3zM945 470h3v3h-3zM919 480h3v3h-3zM985 481h3v3h-3zM952 497h3v3h-3zM979 509h3v3h-3zM937 510h3v3h-3zM961 468h3v3h-3zM947 473h3v3h-3zM959 518h3v3h-3zM939 471h3v3h-3zM957 489h3v3h-3zM942 491h3v3h-3zM920 510h3v3h-3zM931 516h3v3h-3zM999 509h3v3h-3zM992 514h3v3h-3zM995 513h3v3h-3zM967 505h3v3h-3zM983 510h3v3h-3zM979 510h3v3h-3zM1057 594h3v3h-3zM1069 599h3v3h-3zM992 581h3v3h-3zM1027 572h3v3h-3zM1036 597h3v3h-3zM993 558h3v3h-3zM1013 566h3v3h-3zM995 582h3v3h-3zM1034 573h3v3h-3zM1024 566h3v3h-3zM1055 595h3v3h-3zM1029 583h3v3h-3zM1005 572h3v3h-3zM1020 591h3v3h-3zM992 560h3v3h-3zM1066 568h3v3h-3zM1037 569h3v3h-3zM991 568h3v3h-3zM1056 573h3v3h-3zM1044 601h3v3h-3zM1015 564h3v3h-3zM1019 588h3v3h-3zM1003 591h3v3h-3zM991 595h3v3h-3zM1011 583h3v3h-3zM1040 571h3v3h-3zM1028 571h3v3h-3zM988 570h3v3h-3zM1069 563h3v3h-3zM1026 569h3v3h-3zM993 582h3v3h-3zM997 578h3v3h-3zM965 521h3v3h-3zM982 537h3v3h-3zM972 508h3v3h-3zM975 504h3v3h-3zM965 526h3v3h-3zM989 508h3v3h-3zM991 516h3v3h-3zM985 538h3v3h-3zM955 511h3v3h-3zM987 531h3v3h-3zM977 506h3v3h-3zM952 508h3v3h-3zM980 513h3v3h-3zM958 512h3v3h-3z" fill="#31f700" stroke="none"/>
<path d="M941 510h3v3h-3zM982 488h3v3h-3zM972 496h3v3h-3zM952 511h3v3h-3zM997 497h3v3h-3zM944 502h3v3h-3zM934 502h3v3h-3zM954 478h3v3h-3zM929 523h3v3h-3zM974 512h3v3h-3zM931 496h3v3h-3zM981 492h3v3h-3zM974 519h3v3h-3zM993 494h3v3h-3zM955 500h3v3h-3zM980 491h3v3h-3zM997 523h3v3h-3zM935 488h3v3h-3zM988 511h3v3h-3zM932 490h3v3h-3zM916 513h3v3h-3zM927 502h3v3h-3zM924 495h3v3h-3zM925 506h3v3h-3zM943 505h3v3h-3zM955 482h3v3h-3zM923 490h3v3h-3zM974 504h3v3h-3zM930 527h3v3h-3zM956 518h3v3h-3zM936 514h3v3h-3zM975 484h3v3h-3zM910 501h3v3h-3zM970 497h3v3h-3zM981 517h3v3h-3zM948 510h3v3h-3zM934 498h3v3h-3zM932 476h3v3h-3zM944 528h3v3h-3zM985 502h3v3h-3zM1040 599h3v3h-3zM1075 584h3v3h-3zM998 586h3v3h-3zM1036 601h3v3h-3zM1026 593h3v3h-3zM1055 574h3v3h-3zM1054 602h3v3h-3zM1001 597h3v3h-3zM1055 589h3v3h-3zM1038 588h3v3h-3zM1055 605h3v3h-3zM1021 612h3v3h-3zM1023 577h3v3h-3zM1065 583h3v3h-3zM1019 574h3v3h-3zM1001 581h3v3h-3zM1041 596h3v3h-3zM1026 606h3v3h-3zM997 593h3v3h-3zM998 582h3v3h-3zM1002 607h3v3h-3zM1004 615h3v3h-3zM1018 575h3v3h-3zM990 535h3v3h-3zM982 528h3v3h-3zM979 538h3v3h-3zM991 525h3v3h-3zM989 532h3v3h-3zM970 531h3v3h-3zM984 531h3v3h-3z" fill="#62f700" stroke="none"/>
<path d="M928 473h3v3h-3zM927 446h3v3h-3zM918 457h3v3h-3zM945 479h3v3h-3zM977 474h3v3h-3zM936 478h3v3h-3zM922 454h3v3h-3zM914 457h3v3h-3zM911 437h3v3h-3zM922 450h3v3h-3zM927 477h3v3h-3zM923 472h3v3h-3zM917 462h3v3h-3zM937 471h3v3h-3zM937 441h3v3h-3zM915 457h3v3h-3zM930 438h3v3h-3zM997 475h3v3h-3zM914 461h3v3h-3zM914 469h3v3h-3zM1013 487h3v3h-3zM990 492h3v3h-3zM995 492h3v3h-3zM1004 497h3v3h-3zM1010 494h3v3h-3zM972 483h3v3h-3zM1019 495h3v3h-3zM996 483h3v3h-3zM961 487h3v3h-3zM990 507h3v3h-3zM978 504h3v3h-3zM962 486h3v3h-3zM961 498h3v3h-3zM961 491h3v3h-3zM996 513h3v3h-3zM975 494h3v3h-3zM1008 489h3v3h-3zM992 498h3v3h-3zM986 498h3v3h-3zM989 496h3v3h-3zM1010 498h3v3h-3zM1007 500h3v3h-3zM981 508h3v3h-3zM977 504h3v3h-3zM972 489h3v3h-3zM985 484h3v3h-3zM986 494h3v3h-3zM965 505h3v3h-3zM1013 562h3v3h-3zM1047 566h3v3h-3zM1000 557h3v3h-3zM1048 571h3v3h-3zM989 562h3v3h-3zM1030 569h3v3h-3zM990 560h3v3h-3zM1018 563h3v3h-3zM957 505h3v3h-3zM952 517h3v3h-3zM950 517h3v3h-3zM969 512h3v3h-3zM966 497h3v3h-3zM983 518h3v3h-3zM950 501h3v3h-3zM995 521h3v3h-3zM990 501h3v3h-3zM951 496h3v3h-3zM975 508h3v3h-3zM981 507h3v3h-3zM977 527h3v3h-3zM969 492h3v3h-3zM954 514h3v3h-3zM967 510h3v3h-3z" fill="#00f718" stroke="none"/>
<path d="M933 469h3v3h-3zM961 484h3v3h-3zM911 504h3v3h-3zM978 471h3v3h-3zM985 483h3v3h-3zM940 483h3v3h-3zM937 501h3v3h-3zM991 469h3v3h-3zM935 491h3v3h-3zM938 476h3v3h-3zM908 477h3v3h-3zM995 497h3v3h-3zM997 476h3v3h-3zM946 506h3v3h-3zM931 500h3v3h-3zM928 475h3v3h-3zM919 463h3v3h-3zM918 439h3v3h-3zM960 488h3v3h-3zM967 497h3v3h-3zM935 466h3v3h-3zM995 467h3v3h-3zM960 481h3v3h-3zM902 442h3v3h-3zM968 493h3v3h-3zM966 474h3v3h-3zM936 493h3v3h-3zM922 440h3v3h-3zM972 486h3v3h-3zM914 445h3v3h-3zM960 482h3v3h-3zM967 478h3v3h-3zM928 504h3v3h-3zM982 496h3v3h-3zM979 478h3v3h-3zM933 445h3v3h-3zM982 504h3v3h-3zM981 510h3v3h-3zM997 513h3v3h-3zM1008 504h3v3h-3zM961 506h3v3h-3zM976 502h3v3h-3zM971 502h3v3h-3zM971 508h3v3h-3zM990 500h3v3h-3zM996 509h3v3h-3zM966 498h3v3h-3zM976 504h3v3h-3zM977 502h3v3h-3zM1012 496h3v3h-3zM960 504h3v3h-3zM1007 502h3v3h-3zM1021 586h3v3h-3zM1002 573h3v3h-3zM1037 571h3v3h-3zM1029 577h3v3h-3zM1019 565h3v3h-3zM1019 575h3v3h-3zM1048 570h3v3h-3zM992 575h3v3h-3zM1063 579h3v3h-3zM1068 589h3v3h-3zM1047 576h3v3h-3zM1029 572h3v3h-3zM1047 584h3v3h-3zM992 578h3v3h-3zM1057 586h3v3h-3zM1060 592h3v3h-3zM1006 565h3v3h-3zM1072 576h3v3h-3zM1059 587h3v3h-3zM1051 578h3v3h-3zM1044 567h3v3h-3zM1036 568h3v3h-3zM1072 569h3v3h-3zM1002 566h3v3h-3zM1069 586h3v3h-3zM1053 571h3v3h-3zM1062 592h3v3h-3zM1013 567h3v3h-3zM1044 580h3v3h-3zM1006 585h3v3h-3zM1054 592h3v3h-3zM1077 573h3v3h-3zM1001 571h3v3h-3zM996 587h3v3h-3zM1002 584h3v3h-3zM993 561h3v3h-3zM1003 581h3v3h-3zM1017 567h3v3h-3zM1014 587h3v3h-3zM974 540h3v3h-3zM948 514h3v3h-3zM942 510h3v3h-3zM959 514h3v3h-3zM988 525h3v3h-3zM945 509h3v3h-3zM974 537h3v3h-3zM967 493h3v3h-3zM939 497h3v3h-3zM976 523h3v3h-3zM976 537h3v3h-3zM987 535h3v3h-3zM978 500h3v3h-3zM944 501h3v3h-3zM971 498h3v3h-3zM945 495h3v3h-3zM991 520h3v3h-3zM979 496h3v3h-3zM986 496h3v3h-3zM963 509h3v3h-3zM985 533h3v3h-3z" fill="#18f700" stroke="none"/>
<path d="M974 517h3v3h-3zM952 509h3v3h-3zM956 515h3v3h-3zM912 513h3v3h-3zM981 496h3v3h-3zM998 510h3v3h-3zM969 527h3v3h-3zM969 513h3v3h-3zM955 513h3v3h-3zM940 520h3v3h-3zM939 510h3v3h-3zM967 523h3v3h-3zM921 510h3v3h-3zM981 509h3v3h-3zM943 522h3v3h-3zM965 516h3v3h-3zM995 512h3v3h-3zM978 513h3v3h-3zM952 510h3v3h-3zM924 495h3v3h-3zM1013 614h3v3h-3zM1001 586h3v3h-3zM1012 597h3v3h-3zM1043 596h3v3h-3zM1008 614h3v3h-3zM993 605h3v3h-3zM1024 592h3v3h-3zM1065 594h3v3h-3zM1060 587h3v3h-3zM1066 594h3v3h-3zM1065 599h3v3h-3zM1071 590h3v3h-3zM1042 589h3v3h-3zM1011 593h3v3h-3zM1021 603h3v3h-3zM1072 588h3v3h-3zM1045 590h3v3h-3zM1012 594h3v3h-3zM1005 593h3v3h-3zM1018 601h3v3h-3zM1058 601h3v3h-3zM1010 587h3v3h-3zM1026 606h3v3h-3zM1017 582h3v3h-3zM1010 603h3v3h-3zM985 552h3v3h-3z" fill="#7bf700" stroke="none"/>
<path d="M963 510h3v3h-3zM956 520h3v3h-3zM986 528h3v3h-3zM949 524h3v3h-3zM970 520h3v3h-3zM965 521h3v3h-3zM933 526h3v3h-3zM992 526h3v3h-3zM971 528h3v3h-3zM945 528h3v3h-3zM975 527h3v3h-3zM921 520h3v3h-3zM951 524h3v3h-3zM937 516h3v3h-3zM1001 601h3v3h-3zM1027 597h3v3h-3zM1036 597h3v3h-3zM1008 600h3v3h-3zM1033 598h3v3h-3zM996 601h3v3h-3zM1030 595h3v3h-3zM1014 599h3v3h-3zM1038 596h3v3h-3zM1058 600h3v3h-3zM1055 596h3v3h-3zM1022 608h3v3h-3z" fill="#94f700" stroke="none"/>
<path d="M910 444h3v3h-3zM936 440h3v3h-3zM935 442h3v3h-3zM915 437h3v3h-3zM929 437h3v3h-3zM979 500h3v3h-3zM1015 485h3v3h-3zM980 509h3v3h-3zM964 505h3v3h-3zM960 507h3v3h-3zM973 501h3v3h-3zM1014 494h3v3h-3zM988 507h3v3h-3zM974 484h3v3h-3zM1016 493h3v3h-3zM977 499h3v3h-3zM980 489h3v3h-3zM1001 499h3v3h-3zM992 487h3v3h-3zM995 505h3v3h-3zM1001 480h3v3h-3zM1005 500h3v3h-3zM1010 495h3v3h-3zM971 498h3v3h-3zM1025 485h3v3h-3zM971 491h3v3h-3zM1001 503h3v3h-3zM995 485h3v3h-3zM997 491h3v3h-3zM998 510h3v3h-3zM1022 487h3v3h-3zM967 496h3v3h-3zM1010 488h3v3h-3zM1022 483h3v3h-3zM999 490h3v3h-3zM970 503h3v3h-3zM1000 510h3v3h-3zM961 487h3v3h-3zM998 511h3v3h-3zM975 498h3v3h-3zM980 484h3v3h-3zM982 478h3v3h-3zM992 485h3v3h-3zM993 505h3v3h-3zM1009 497h3v3h-3zM1011 480h3v3h-3zM991 483h3v3h-3zM967 488h3v3h-3zM999 560h3v3h-3zM1013 555h3v3h-3zM977 515h3v3h-3zM983 492h3v3h-3zM944 498h3v3h-3zM977 506h3v3h-3zM982 511h3v3h-3zM953 499h3v3h-3zM947 502h3v3h-3zM963 490h3v3h-3zM943 507h3v3h-3zM945 513h3v3h-3zM970 497h3v3h-3zM990 507h3v3h-3zM976 506h3v3h-3zM953 507h3v3h-3zM975 499h3v3h-3z" fill="#00f731" stroke="none"/>
<path d="M988 527h3v3h-3z" fill="#adf700" stroke="none"/>
<path d="M914 445h3v3h-3zM1031 445h3v3h-3zM1032 448h3v3h-3zM1021 454h3v3h-3zM1039 452h3v3h-3zM1043 452h3v3h-3zM1049 451h3v3h-3zM1015 462h3v3h-3zM1023 459h3v3h-3zM1015 467h3v3h-3zM1027 468h3v3h-3zM1077 474h3v3h-3zM1069 476h3v3h-3zM1071 483h3v3h-3zM1072 487h3v3h-3zM1071 492h3v3h-3zM1083 494h3v3h-3zM1085 508h3v3h-3zM1076 512h3v3h-3zM1070 517h3v3h-3zM1000 489h3v3h-3zM975 475h3v3h-3zM976 490h3v3h-3zM991 482h3v3h-3zM1024 483h3v3h-3zM997 484h3v3h-3zM975 481h3v3h-3zM993 489h3v3h-3zM989 486h3v3h-3zM971 478h3v3h-3zM1016 501h3v3h-3zM992 485h3v3h-3zM984 471h3v3h-3zM971 472h3v3h-3zM1002 475h3v3h-3zM961 480h3v3h-3zM1015 499h3v3h-3zM968 486h3v3h-3zM1001 480h3v3h-3zM1008 495h3v3h-3zM967 496h3v3h-3zM996 495h3v3h-3zM978 489h3v3h-3zM991 486h3v3h-3zM969 487h3v3h-3zM991 473h3v3h-3zM999 497h3v3h-3zM1013 500h3v3h-3zM1021 481h3v3h-3zM1018 484h3v3h-3zM972 481h3v3h-3zM971 472h3v3h-3zM996 471h3v3h-3zM994 487h3v3h-3zM965 473h3v3h-3zM979 488h3v3h-3zM1004 487h3v3h-3zM967 474h3v3h-3zM1011 488h3v3h-3zM990 485h3v3h-3zM997 473h3v3h-3zM968 495h3v3h-3zM984 475h3v3h-3zM989 484h3v3h-3zM978 481h3v3h-3zM1022 496h3v3h-3zM962 487h3v3h-3zM962 481h3v3h-3zM1018 484h3v3h-3zM1004 489h3v3h-3zM974 502h3v3h-3zM981 487h3v3h-3zM975 489h3v3h-3zM989 489h3v3h-3zM938 498h3v3h-3zM978 491h3v3h-3zM972 501h3v3h-3zM988 496h3v3h-3zM978 491h3v3h-3z" fill="#00f74a" stroke="none"/>
<path d="M966 478h3v3h-3zM957 469h3v3h-3zM989 472h3v3h-3zM996 483h3v3h-3zM986 478h3v3h-3zM960 476h3v3h-3zM969 472h3v3h-3zM964 468h3v3h-3zM998 481h3v3h-3zM958 475h3v3h-3zM961 471h3v3h-3zM995 471h3v3h-3zM952 482h3v3h-3zM981 486h3v3h-3zM951 469h3v3h-3zM949 470h3v3h-3zM970 478h3v3h-3zM954 467h3v3h-3zM962 472h3v3h-3zM970 471h3v3h-3zM988 468h3v3h-3zM988 469h3v3h-3zM956 485h3v3h-3zM982 484h3v3h-3zM972 471h3v3h-3zM978 487h3v3h-3zM955 481h3v3h-3zM991 483h3v3h-3zM992 478h3v3h-3zM995 471h3v3h-3zM994 470h3v3h-3zM978 488h3v3h-3zM964 476h3v3h-3z" fill="#00f7c5" stroke="none"/>
<path d="M964 478h3v3h-3zM997 471h3v3h-3zM968 479h3v3h-3zM982 477h3v3h-3zM957 467h3v3h-3zM991 479h3v3h-3zM984 477h3v3h-3zM995 476h3v3h-3zM993 465h3v3h-3zM973 472h3v3h-3zM961 471h3v3h-3zM977 481h3v3h-3zM982 476h3v3h-3zM986 469h3v3h-3zM973 471h3v3h-3zM963 468h3v3h-3zM981 484h3v3h-3zM977 482h3v3h-3zM951 476h3v3h-3zM975 483h3v3h-3zM957 484h3v3h-3zM947 469h3v3h-3zM965 475h3v3h-3zM976 473h3v3h-3zM982 471h3v3h-3zM972 487h3v3h-3zM976 479h3v3h-3zM950 476h3v3h-3zM972 474h3v3h-3zM996 475h3v3h-3zM960 485h3v3h-3zM980 483h3v3h-3zM955 480h3v3h-3zM963 469h3v3h-3zM991 477h3v3h-3zM951 474h3v3h-3zM965 422h3v3h-3zM963 426h3v3h-3zM979 468h3v3h-3zM984 475h3v3h-3zM986 474h3v3h-3z" fill="#00f7ad" stroke="none"/>
<path d="M976 469h3v3h-3zM961 485h3v3h-3zM961 469h3v3h-3zM961 486h3v3h-3zM987 476h3v3h-3zM978 488h3v3h-3zM973 488h3v3h-3zM985 484h3v3h-3zM963 471h3v3h-3zM992 467h3v3h-3zM972 472h3v3h-3zM994 466h3v3h-3zM948 470h3v3h-3zM994 476h3v3h-3zM980 475h3v3h-3zM991 486h3v3h-3zM996 470h3v3h-3zM988 484h3v3h-3zM998 479h3v3h-3zM985 469h3v3h-3zM970 409h3v3h-3zM960 440h3v3h-3zM1017 492h3v3h-3zM1002 479h3v3h-3zM970 490h3v3h-3zM980 479h3v3h-3zM997 485h3v3h-3zM971 486h3v3h-3zM985 482h3v3h-3zM969 469h3v3h-3zM1013 486h3v3h-3zM1000 482h3v3h-3zM982 484h3v3h-3zM966 473h3v3h-3zM1024 484h3v3h-3zM997 480h3v3h-3zM964 487h3v3h-3zM1012 479h3v3h-3zM963 478h3v3h-3zM992 483h3v3h-3zM991 485h3v3h-3zM965 477h3v3h-3z" fill="#00f77b" stroke="none"/>
<path d="M969 475h3v3h-3zM994 481h3v3h-3zM996 482h3v3h-3zM991 482h3v3h-3zM971 469h3v3h-3zM994 483h3v3h-3zM964 484h3v3h-3zM955 481h3v3h-3zM997 485h3v3h-3zM959 476h3v3h-3zM992 467h3v3h-3zM958 468h3v3h-3zM998 472h3v3h-3zM987 483h3v3h-3zM987 472h3v3h-3zM996 474h3v3h-3zM949 467h3v3h-3zM996 464h3v3h-3zM963 477h3v3h-3zM972 489h3v3h-3zM954 482h3v3h-3zM979 489h3v3h-3zM989 470h3v3h-3zM998 486h3v3h-3zM979 475h3v3h-3zM954 484h3v3h-3zM973 470h3v3h-3zM976 468h3v3h-3zM979 473h3v3h-3zM977 472h3v3h-3zM964 478h3v3h-3zM991 468h3v3h-3zM981 480h3v3h-3zM982 472h3v3h-3zM965 475h3v3h-3zM1000 473h3v3h-3zM980 471h3v3h-3zM984 474h3v3h-3zM1005 476h3v3h-3zM1000 484h3v3h-3z" fill="#00f794" stroke="none"/>
<path d="M971 477h3v3h-3zM957 475h3v3h-3zM990 449h3v3h-3zM989 453h3v3h-3zM991 455h3v3h-3zM1009 441h3v3h-3zM982 460h3v3h-3zM976 464h3v3h-3zM975 469h3v3h-3zM972 472h3v3h-3z" fill="#00f7de" stroke="none"/>
<path d="M1063 484h3v3h-3zM1071 483h3v3h-3z" fill="#00f7f7" stroke="none"/>
<path d="M1076 509h4v4h-4zM1066 501h4v4h-4zM1047 500h4v4h-4zM1056 512h4v4h-4zM1058 513h4v4h-4zM1047 502h4v4h-4zM1071 511h4v4h-4zM1080 507h4v4h-4zM1077 505h4v4h-4zM1075 503h4v4h-4zM1084 511h4v4h-4zM1061 509h4v4h-4zM1076 513h4v4h-4zM1055 512h4v4h-4zM1065 500h4v4h-4z" fill="#00f7ad" stroke="none"/>
<path d="M1055 508h4v4h-4zM1049 507h4v4h-4zM1064 499h4v4h-4zM1060 516h4v4h-4zM1076 508h4v4h-4zM1086 501h4v4h-4z" fill="#00f7c5" stroke="none"/>
<path d="M1074 506h4v4h-4zM1063 499h4v4h-4zM1068 513h4v4h-4zM1050 498h4v4h-4zM1045 498h4v4h-4zM1080 508h4v4h-4zM1061 516h4v4h-4zM1077 512h4v4h-4zM1060 506h4v4h-4zM1057 510h4v4h-4zM1057 513h4v4h-4zM1064 516h4v4h-4zM1062 513h4v4h-4zM1070 501h4v4h-4zM1050 513h4v4h-4zM1056 509h4v4h-4z" fill="#00f794" stroke="none"/>
<path d="M1049 503h4v4h-4zM1062 511h4v4h-4zM1059 512h4v4h-4z" fill="#00f77b" stroke="none"/>
<path d="M1026 494h3v3h-3zM960 482h3v3h-3zM959 474h3v3h-3zM970 489h3v3h-3zM1004 477h3v3h-3zM995 483h3v3h-3zM969 496h3v3h-3zM971 489h3v3h-3zM1016 496h3v3h-3zM961 472h3v3h-3zM1017 484h3v3h-3zM1000 476h3v3h-3zM976 484h3v3h-3zM1007 478h3v3h-3zM991 479h3v3h-3zM981 487h3v3h-3zM986 484h3v3h-3zM968 476h3v3h-3zM991 473h3v3h-3zM964 476h3v3h-3zM1021 496h3v3h-3zM979 488h3v3h-3zM998 492h3v3h-3zM1010 490h3v3h-3zM988 496h3v3h-3z" fill="#00f762" stroke="none"/>
<path d="M1037 518h4v4h-4zM1057 532h4v4h-4zM1023 521h4v4h-4zM1027 545h4v4h-4zM1076 541h4v4h-4zM1037 524h4v4h-4zM1079 538h4v4h-4zM1032 524h4v4h-4zM1085 523h4v4h-4zM1079 523h4v4h-4zM1084 533h4v4h-4z" fill="#00f731" stroke="none"/>
<path d="M1079 537h4v4h-4zM1035 512h4v4h-4zM1067 526h4v4h-4zM1042 517h4v4h-4zM1038 519h4v4h-4zM1032 520h4v4h-4zM1064 530h4v4h-4zM1054 535h4v4h-4zM1068 535h4v4h-4zM1042 538h4v4h-4zM1065 539h4v4h-4zM1056 543h4v4h-4zM1059 548h4v4h-4zM1042 549h4v4h-4zM1032 552h4v4h-4zM1093 493h4v4h-4zM1083 493h4v4h-4zM1071 492h4v4h-4zM1075 496h4v4h-4zM1125 539h4v4h-4zM1127 546h4v4h-4zM1119 560h4v4h-4zM1127 490h4v4h-4z" fill="#00f74a" stroke="none"/>
<path d="M1038 516h4v4h-4zM1025 521h4v4h-4zM1047 540h4v4h-4zM1078 535h4v4h-4zM1032 526h4v4h-4zM1064 546h4v4h-4zM1069 541h4v4h-4zM1073 529h4v4h-4zM1078 531h4v4h-4zM1085 520h4v4h-4zM1085 531h4v4h-4zM1085 531h4v4h-4z" fill="#18f700" stroke="none"/>
<path d="M1071 528h4v4h-4zM1024 518h4v4h-4zM1026 528h4v4h-4zM1044 539h4v4h-4zM1062 523h4v4h-4zM1029 530h4v4h-4zM1029 525h4v4h-4zM1059 532h4v4h-4zM1085 518h4v4h-4zM1080 518h4v4h-4zM1082 520h4v4h-4z" fill="#31f700" stroke="none"/>
<path d="M1062 541h4v4h-4zM1076 545h4v4h-4zM1046 532h4v4h-4zM1054 528h4v4h-4zM1025 540h4v4h-4zM1028 531h4v4h-4zM1045 540h4v4h-4zM1028 541h4v4h-4zM1037 541h4v4h-4zM1077 516h4v4h-4zM1082 521h4v4h-4zM1079 534h4v4h-4zM1082 521h4v4h-4zM1084 518h4v4h-4zM1082 520h4v4h-4zM1082 527h4v4h-4z" fill="#00f718" stroke="none"/>
<path d="M1099 515h3v3h-3zM1103 517h3v3h-3zM1098 526h3v3h-3z" fill="#2080ff" stroke="none"/>
<path d="M1012 615h3v3h-3zM970 633h3v3h-3zM975 640h3v3h-3z" fill="#c5f700" stroke="none"/>
<path d="M1099 514h4v4h-4zM1103 517h4v4h-4zM1097 525h4v4h-4z" fill="#2080ff" stroke="none"/>
<path d="M1119 551h5v5h-5zM1104 567h5v5h-5zM1081 570h5v5h-5zM1086 571h5v5h-5zM1086 575h5v5h-5z" fill="#adf700" stroke="none"/>
<path d="M1048 599h4v4h-4zM1053 600h4v4h-4zM1058 600h4v4h-4zM1062 591h4v4h-4z" fill="#7bf700" stroke="none"/>
<path d="M988 669h3v3h-3z" fill="#ffb000" stroke="none"/>
<path d="M566.3 503.3L749.6 758.1M566.3 503.3L886.5 397.8M603.6 491.0L795.6 735.1M580.1 522.5L905.4 411.4M639.6 479.2L839.4 713.2M594.7 542.7L925.3 425.7M674.3 467.7L881.2 692.3M610.1 564.2L946.1 440.7M707.8 456.7L920.9 672.4M626.4 586.9L967.9 456.4M740.1 446.0L958.9 653.4M643.8 611.0L990.9 473.0M771.4 435.7L995.2 635.2M662.3 636.7L1015.0 490.4M801.6 425.8L1029.9 617.9M681.9 664.0L1040.4 508.7M830.8 416.1L1063.2 601.2M703.0 693.3L1067.3 528.0M859.1 406.8L1095.0 585.3M725.5 724.5L1095.6 548.4M886.5 397.8L1125.6 570.0M749.6 758.1L1125.6 570.0" stroke="#fff" stroke-opacity=".22" stroke-width="1" fill="none"/>
<path d="M872.5 391.5 L872.5 407 L876 403.5 L878.5 409.5 L880.8 408.5 L878.3 402.8 L883 402.8 Z" fill="#000" stroke="#fff" stroke-width="1" shape-rendering="auto"/>
</svg>
</div>

<!-- TIME DOCK -->
<div class="abs docktitle" style="left:1px;top:897px;width:1439px;height:18px;padding:0 0 0 4px;line-height:17px">Time</div>
<div class="abs" style="left:1424px;top:899px;width:11px;height:11px"><svg width="11" height="11" viewBox="0 0 11 11" style="position:absolute;left:0;top:0"><rect x="0.5" y="0.5" width="10" height="10" rx="1.5" fill="none" stroke="#000"/><path d="M2.6 2.6 L8.4 8.4 M8.4 2.6 L2.6 8.4" stroke="#000" stroke-width="2.1"/></svg></div>
<div class="abs lbl" style="left:7px">Wall Time:</div>
<div class="abs inp" style="left:89px;width:242px">1347047525.832609</div>
<div class="abs lbl" style="left:342px">Wall Elapsed:</div>
<div class="abs inp" style="left:444px;width:222px">924.715692</div>
<div class="abs lbl" style="left:677px">ROS Time:</div>
<div class="abs inp" style="left:757px;width:245px">1347047525.832605</div>
<div class="abs lbl" style="left:1013px;letter-spacing:-.35px">ROS Elapsed:</div>
<div class="abs inp" style="left:1113px;width:225px">924.715692</div>
<div class="abs btn" style="left:1350px;top:929px;width:83px;height:27px;line-height:25px">Reset</div>
<div class="abs" style="left:1427px;top:958px;width:12px;height:12px;background:repeating-linear-gradient(135deg,transparent 0 2px,#c9c7c3 2px 3px);clip-path:polygon(100% 0,100% 100%,0 100%)"></div>
<div class="abs" style="left:0;top:971px;width:1441px;height:2px;background:#8f8d89"></div>
</body>
</html>
